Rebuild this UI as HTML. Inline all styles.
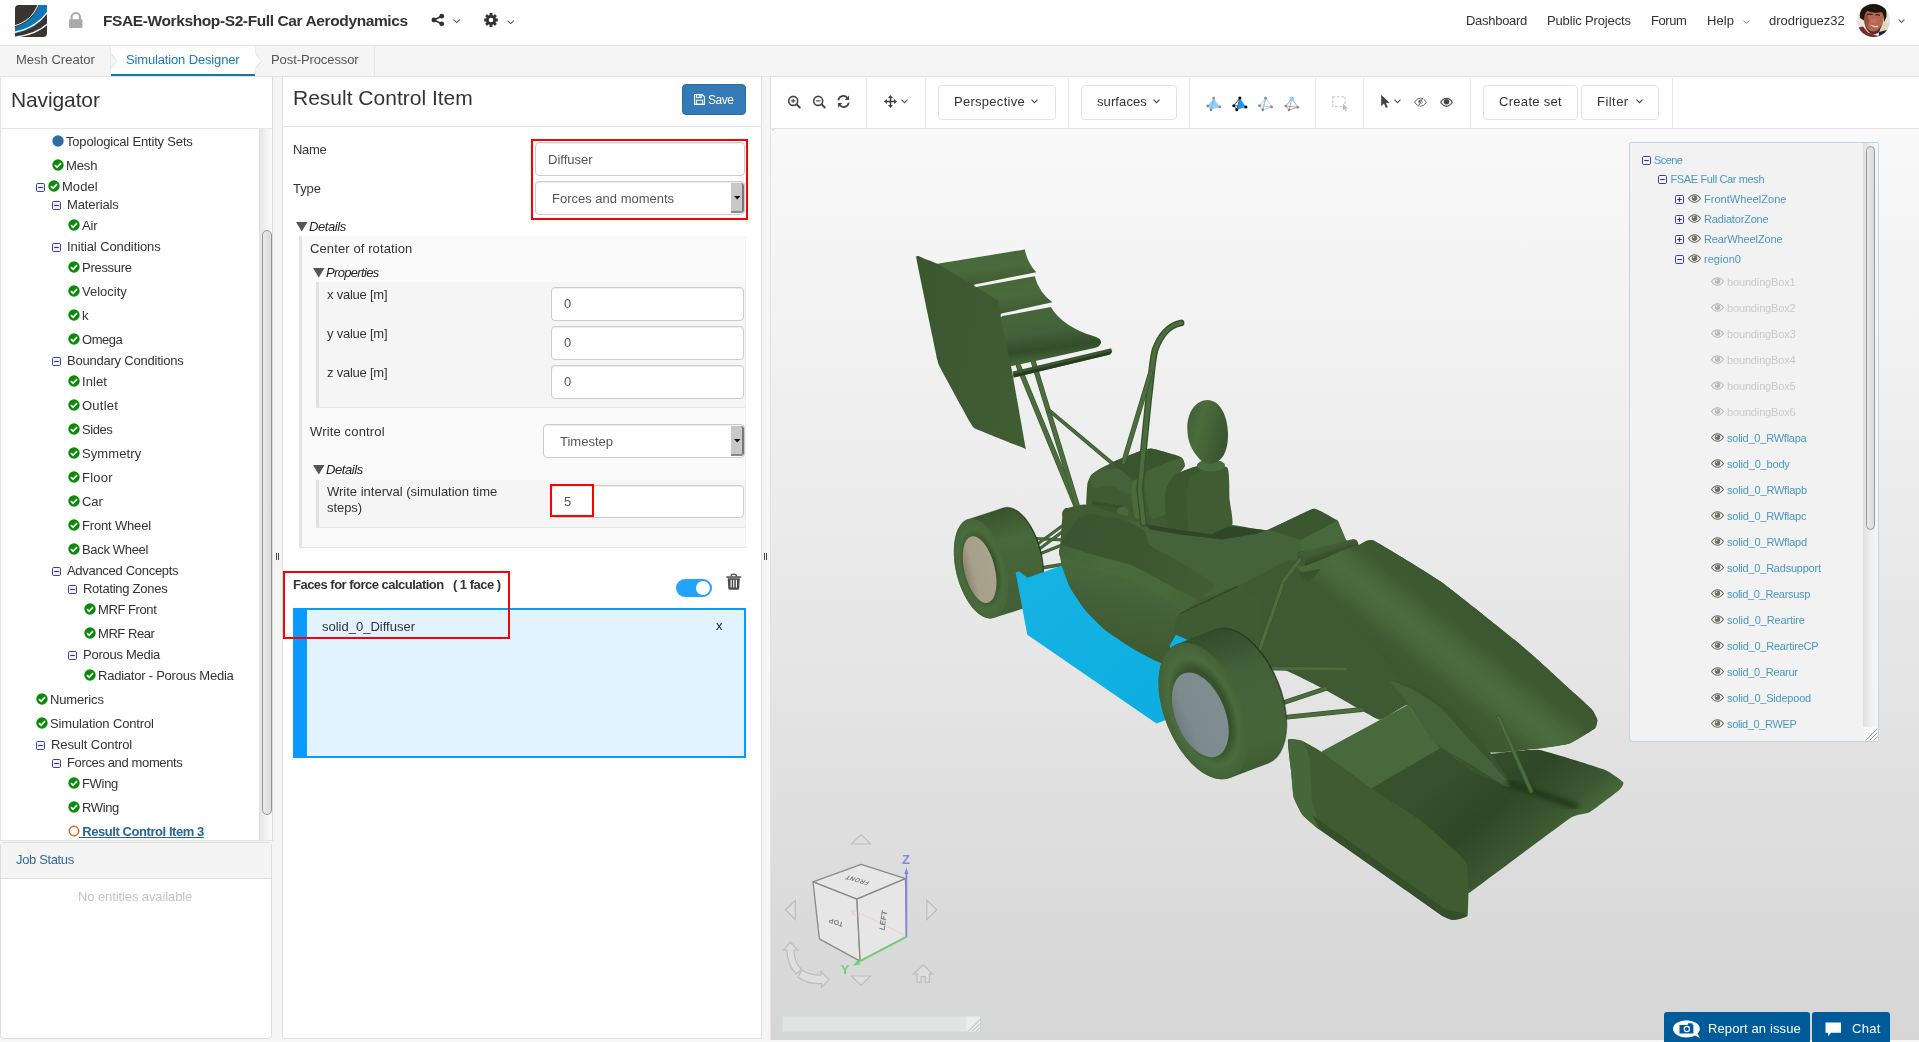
<!DOCTYPE html>
<html><head><meta charset="utf-8"><title>SimScale</title>
<style>
*{box-sizing:border-box;margin:0;padding:0}
html,body{width:1919px;height:1042px;overflow:hidden;background:#f5f5f5;font-family:"Liberation Sans",sans-serif;font-size:13px;color:#333}
.a{position:absolute;white-space:pre}
.t{position:absolute;white-space:pre;line-height:16px;height:16px;font-size:13px;color:#333}
svg{position:absolute;overflow:visible}
#hdr{position:absolute;left:0;top:0;width:1919px;height:46px;background:#fff;border-bottom:1px solid #e4e4e4}
#tabs{position:absolute;left:0;top:46px;width:1919px;height:31px;background:#f5f5f5;border-bottom:1px solid #e2e2e2}
.panel{position:absolute;background:#fff;border:1px solid #e3e3e3}
.inp{position:absolute;background:#fff;border:1px solid #ccc;border-radius:4px;box-shadow:inset 0 1px 1px rgba(0,0,0,.075);font-size:13px;color:#555;line-height:30px;white-space:pre}
.red{position:absolute;border:2px solid #f00}
.btn{position:absolute;background:#fff;border:1px solid #e2e2e2;border-radius:4px;font-size:13px;color:#333;white-space:pre}
.sep{position:absolute;top:78px;width:1px;height:50px;background:#e7e7e7}

#root{position:absolute;left:0;top:0;width:1919px;height:1042px;overflow:hidden;will-change:transform;background:#f5f5f5}

</style></head>
<body>
<div id="root">
<!-- header -->
<div id="hdr"></div>
<!-- logo -->
<svg style="left:15px;top:5px" width="32" height="32" viewBox="0 0 32 32">
  <defs><clipPath id="lg"><path d="M4 0H32V28a4 4 0 0 1-4 4H0V4a4 4 0 0 1 4-4z"/></clipPath></defs>
  <g clip-path="url(#lg)">
    <rect width="32" height="32" fill="#3b3532"/>
    <path d="M-1 22.4C11 19.5 20 11 24.5-1L33-1 33 7.2C25 19 14 26 -1 28.6z" fill="#0d76b3"/>
    <path d="M-1 20.9C10.5 18 19 10.5 23.3-1" fill="none" stroke="#fff" stroke-width="1"/>
    <path d="M-1 27.4C13 25 24.5 18 33 6.6" fill="none" stroke="#fff" stroke-width="1.3"/>
    <path d="M-1 32.2C13 30.8 25 26 33 18.5" fill="none" stroke="#fff" stroke-width="1.3"/>
  </g>
</svg>
<!-- lock -->
<svg style="left:68px;top:11px" width="16" height="18" viewBox="0 0 16 18">
  <path d="M3.6 9V6.2a4.2 4.2 0 0 1 8.4 0V9" fill="none" stroke="#aaa" stroke-width="2.1"/>
  <rect x="1.1" y="8.3" width="13.4" height="8.6" rx="0.8" fill="#aaa"/>
</svg>
<div class="a" style="left:103px;top:11px;font-size:15.5px;font-weight:bold;line-height:20px;letter-spacing:-0.39px;color:#333">FSAE-Workshop-S2-Full Car Aerodynamics</div>
<!-- share -->
<svg style="left:431px;top:13px" width="14" height="14" viewBox="0 0 14 14">
  <path d="M2.9 7L10.5 3.3M2.9 7L10.5 10.7" stroke="#333" stroke-width="1.7" fill="none"/>
  <circle cx="2.9" cy="7" r="2.4" fill="#333"/><circle cx="10.7" cy="3.2" r="2.4" fill="#333"/><circle cx="10.7" cy="10.8" r="2.4" fill="#333"/>
</svg>
<svg style="left:453px;top:19px" width="8" height="5" viewBox="0 0 8 5"><path d="M0.6 0.6L3.7 3.6 6.8 0.6" fill="none" stroke="#555" stroke-width="1.1"/></svg>
<!-- gear -->
<svg style="left:484px;top:13px" width="14" height="14" viewBox="-7 -7 14 14">
  <g fill="#333">
    <circle r="5.1"/>
    <rect x="-1.45" y="-6.9" width="2.9" height="13.8" rx="0.5"/>
    <rect x="-1.45" y="-6.9" width="2.9" height="13.8" rx="0.5" transform="rotate(45)"/><rect x="-1.45" y="-6.9" width="2.9" height="13.8" rx="0.5" transform="rotate(90)"/><rect x="-1.45" y="-6.9" width="2.9" height="13.8" rx="0.5" transform="rotate(135)"/>
  </g>
  <circle r="2.3" fill="#fff"/>
</svg>
<svg style="left:507px;top:20px" width="8" height="5" viewBox="0 0 8 5"><path d="M0.6 0.6L3.7 3.6 6.8 0.6" fill="none" stroke="#555" stroke-width="1.1"/></svg>
<!-- right nav -->
<div class="t" style="left:1466px;top:13px;font-size:13px;letter-spacing:-0.29px">Dashboard</div>
<div class="t" style="left:1547px;top:13px;font-size:13px;letter-spacing:-0.14px">Public Projects</div>
<div class="t" style="left:1651px;top:13px;font-size:13px;letter-spacing:-0.42px">Forum</div>
<div class="t" style="left:1707px;top:13px;font-size:13px;letter-spacing:0.11px">Help</div>
<svg style="left:1743px;top:19.500px" width="7" height="5" viewBox="0 0 7 5"><path d="M0.5 0.6L3.3 3.4 6.1 0.6" fill="none" stroke="#777" stroke-width="1"/></svg>
<div class="t" style="left:1769px;top:13px;font-size:13px;letter-spacing:-0.01px">drodriguez32</div>
<!-- avatar -->
<svg style="left:1857px;top:4px" width="33" height="33" viewBox="0 0 33 33">
  <defs><clipPath id="av"><circle cx="16.5" cy="16.5" r="16.5"/></clipPath><filter id="avb" x="-10%" y="-10%" width="120%" height="120%"><feGaussianBlur stdDeviation="0.55"/></filter></defs>
  <g clip-path="url(#av)"><g filter="url(#avb)">
    <rect x="-2" y="-2" width="37" height="37" fill="#e6e4e1"/>
    <rect x="24" y="19" width="11" height="9" fill="#e2d8b6"/>
    <path d="M-1 34V24l7-1.500 5 6 10 3.500 3-3 10 0v5z" fill="#7c2a26"/>
    <path d="M22 34v-6l12-3v9z" fill="#1a2140"/>
    <path d="M6.500 12C6.500 5 12 3 17 3s9.500 2 9.500 9c0 6-1.500 11.500-4.500 14.500s-7 4-10 1S6.500 18 6.500 12z" fill="#b4664f"/>
    <path d="M7 13c0 5 1.500 9 3 11l2-7c-1-2-1.500-5-1-8z" fill="#8a4638" opacity="0.8"/>
    <path d="M14 15c1.500-1 4-1 5.500 0l.5 3.500c-2 1-4.500 1-6.500 0z" fill="#c4705a" opacity="0.9"/>
    <path d="M7 17c1 5 3 10 6 12s7 1.500 9.500-1.500l2-6.500c-2 4.500-5 6.500-8.500 6.500S9 23.500 7 17z" fill="#4a3029"/>
    <path d="M3 14C2 6 7-1 16-1s14.500 4 13.500 13.500l-2.500 6c0-5.500-.8-9.500-2.800-10.500-4 1-9 1-14-1-2 2-3.200 5-3.200 9.500z" fill="#1c1411"/>
    <path d="M12.500 19.800c2.500 2 5.500 2.700 8.800 1.600l-.6 1.500c-3 .7-5.800 0-8.200-3.100z" fill="#f4ede6"/>
    <path d="M10 10.600c2-.8 4-.8 5.500-.1M18.500 11c1.500-.5 3-.3 4.500.3" stroke="#1c1411" stroke-width="1.100" fill="none"/>
  </g></g>
</svg>
<svg style="left:1898px;top:19px" width="8" height="5" viewBox="0 0 8 5"><path d="M0.6 0.5L3.5 3.4 6.4 0.5" fill="none" stroke="#667" stroke-width="1.1"/></svg>

<!-- tabs -->
<div id="tabs"></div>
<div class="a" style="left:111px;top:46px;width:144px;height:30px;background:#fff;border-bottom:2px solid #1676b3"></div>
<div class="a" style="left:110px;top:46px;width:1px;height:28px;background:#ececec"></div>
<div class="a" style="left:255px;top:46px;width:1px;height:28px;background:#ececec"></div>
<svg style="left:111px;top:53px" width="7" height="16" viewBox="0 0 7 16"><path d="M0,0.400 L5.800,7.900 L0,15.400Z" fill="#f5f5f5"/><path d="M0,0.400 L5.800,7.900 L0,15.400" fill="none" stroke="#e2e2e2" stroke-width="1"/></svg>
<svg style="left:255px;top:53px" width="8" height="16" viewBox="0 0 8 16"><path d="M0,0.400 L6.500,7.900 L0,15.400Z" fill="#fff"/><path d="M0.500,0.400 L6.500,7.900 L0.500,15.400" fill="none" stroke="#e2e2e2" stroke-width="1"/></svg>
<div class="a" style="left:374px;top:46px;width:1px;height:30px;background:#e6e6e6"></div>
<div class="t" style="left:16px;top:52px;font-size:13px;letter-spacing:0.01px;color:#555">Mesh Creator</div>
<div class="t" style="left:126px;top:52px;font-size:13px;letter-spacing:-0.15px;color:#1b78b6">Simulation Designer</div>
<div class="t" style="left:271px;top:52px;font-size:13px;letter-spacing:-0.09px;color:#555">Post-Processor</div>

<!-- nav -->
<div class="panel" style="left:0;top:76px;width:273px;height:765px;border-right-color:#dcdcdc"></div>
<div class="a" style="left:11px;top:87px;font-size:21px;line-height:26px;letter-spacing:-0.12px;color:#333">Navigator</div>
<div class="a" style="left:1px;top:128px;width:271px;height:1px;background:#e5e5e5"></div>
<div class="a" style="left:259px;top:129px;width:13px;height:711px;background:linear-gradient(90deg,#e2e2e2,#f3f3f3 60%,#fbfbfb)"></div>
<div class="a" style="left:262px;top:230px;width:10px;height:585px;border:1px solid #959595;border-radius:5px;background:linear-gradient(90deg,#e9e9e9,#dadada)"></div>
<svg style="left:51.5px;top:135px" width="12" height="12" viewBox="0 0 12 12"><circle cx="6" cy="6" r="5.7" fill="#2d6da3"/></svg>
<div class="t" style="left:66px;top:134px;font-size:13px;letter-spacing:-0.18px">Topological Entity Sets</div>
<svg style="left:51.5px;top:159px" width="12" height="12" viewBox="0 0 12 12"><circle cx="6" cy="6" r="5.7" fill="#0a8a0a"/><path d="M3 6.2L5.1 8.3 9 4.1" fill="none" stroke="#fff" stroke-width="1.7"/></svg>
<div class="t" style="left:66px;top:158px;font-size:13px;letter-spacing:-0.10px">Mesh</div>
<svg style="left:36px;top:182.5px" width="9" height="9" viewBox="0 0 9 9"><rect x="0.5" y="0.5" width="8" height="8" rx="1.2" fill="#f4f4fb" stroke="#3a3fb0" stroke-width="1"/><path d="M2.2 4.5H6.8" stroke="#2a2f9a" stroke-width="1.1"/></svg>
<svg style="left:47.5px;top:180px" width="12" height="12" viewBox="0 0 12 12"><circle cx="6" cy="6" r="5.7" fill="#0a8a0a"/><path d="M3 6.2L5.1 8.3 9 4.1" fill="none" stroke="#fff" stroke-width="1.7"/></svg>
<div class="t" style="left:62px;top:179px;font-size:13px;letter-spacing:0.04px">Model</div>
<svg style="left:52px;top:200.5px" width="9" height="9" viewBox="0 0 9 9"><rect x="0.5" y="0.5" width="8" height="8" rx="1.2" fill="#f4f4fb" stroke="#3a3fb0" stroke-width="1"/><path d="M2.2 4.5H6.8" stroke="#2a2f9a" stroke-width="1.1"/></svg>
<div class="t" style="left:67px;top:197px;font-size:13px;letter-spacing:-0.12px">Materials</div>
<svg style="left:67.5px;top:219px" width="12" height="12" viewBox="0 0 12 12"><circle cx="6" cy="6" r="5.7" fill="#0a8a0a"/><path d="M3 6.2L5.1 8.3 9 4.1" fill="none" stroke="#fff" stroke-width="1.7"/></svg>
<div class="t" style="left:82px;top:218px;font-size:13px;letter-spacing:-0.10px">Air</div>
<svg style="left:52px;top:242.5px" width="9" height="9" viewBox="0 0 9 9"><rect x="0.5" y="0.5" width="8" height="8" rx="1.2" fill="#f4f4fb" stroke="#3a3fb0" stroke-width="1"/><path d="M2.2 4.5H6.8" stroke="#2a2f9a" stroke-width="1.1"/></svg>
<div class="t" style="left:67px;top:239px;font-size:13px;letter-spacing:-0.10px">Initial Conditions</div>
<svg style="left:67.5px;top:261px" width="12" height="12" viewBox="0 0 12 12"><circle cx="6" cy="6" r="5.7" fill="#0a8a0a"/><path d="M3 6.2L5.1 8.3 9 4.1" fill="none" stroke="#fff" stroke-width="1.7"/></svg>
<div class="t" style="left:82px;top:260px;font-size:13px;letter-spacing:-0.28px">Pressure</div>
<svg style="left:67.5px;top:285px" width="12" height="12" viewBox="0 0 12 12"><circle cx="6" cy="6" r="5.7" fill="#0a8a0a"/><path d="M3 6.2L5.1 8.3 9 4.1" fill="none" stroke="#fff" stroke-width="1.7"/></svg>
<div class="t" style="left:82px;top:284px;font-size:13px;letter-spacing:0.01px">Velocity</div>
<svg style="left:67.5px;top:309px" width="12" height="12" viewBox="0 0 12 12"><circle cx="6" cy="6" r="5.7" fill="#0a8a0a"/><path d="M3 6.2L5.1 8.3 9 4.1" fill="none" stroke="#fff" stroke-width="1.7"/></svg>
<div class="t" style="left:82px;top:308px;font-size:13px;letter-spacing:-0.10px">k</div>
<svg style="left:67.5px;top:333px" width="12" height="12" viewBox="0 0 12 12"><circle cx="6" cy="6" r="5.7" fill="#0a8a0a"/><path d="M3 6.2L5.1 8.3 9 4.1" fill="none" stroke="#fff" stroke-width="1.7"/></svg>
<div class="t" style="left:82px;top:332px;font-size:13px;letter-spacing:-0.45px">Omega</div>
<svg style="left:52px;top:356.5px" width="9" height="9" viewBox="0 0 9 9"><rect x="0.5" y="0.5" width="8" height="8" rx="1.2" fill="#f4f4fb" stroke="#3a3fb0" stroke-width="1"/><path d="M2.2 4.5H6.8" stroke="#2a2f9a" stroke-width="1.1"/></svg>
<div class="t" style="left:67px;top:353px;font-size:13px;letter-spacing:-0.22px">Boundary Conditions</div>
<svg style="left:67.5px;top:375px" width="12" height="12" viewBox="0 0 12 12"><circle cx="6" cy="6" r="5.7" fill="#0a8a0a"/><path d="M3 6.2L5.1 8.3 9 4.1" fill="none" stroke="#fff" stroke-width="1.7"/></svg>
<div class="t" style="left:82px;top:374px;font-size:13px;letter-spacing:0.08px">Inlet</div>
<svg style="left:67.5px;top:399px" width="12" height="12" viewBox="0 0 12 12"><circle cx="6" cy="6" r="5.7" fill="#0a8a0a"/><path d="M3 6.2L5.1 8.3 9 4.1" fill="none" stroke="#fff" stroke-width="1.7"/></svg>
<div class="t" style="left:82px;top:398px;font-size:13px;letter-spacing:0.24px">Outlet</div>
<svg style="left:67.5px;top:423px" width="12" height="12" viewBox="0 0 12 12"><circle cx="6" cy="6" r="5.7" fill="#0a8a0a"/><path d="M3 6.2L5.1 8.3 9 4.1" fill="none" stroke="#fff" stroke-width="1.7"/></svg>
<div class="t" style="left:82px;top:422px;font-size:13px;letter-spacing:-0.45px">Sides</div>
<svg style="left:67.5px;top:447px" width="12" height="12" viewBox="0 0 12 12"><circle cx="6" cy="6" r="5.7" fill="#0a8a0a"/><path d="M3 6.2L5.1 8.3 9 4.1" fill="none" stroke="#fff" stroke-width="1.7"/></svg>
<div class="t" style="left:82px;top:446px;font-size:13px;letter-spacing:0.09px">Symmetry</div>
<svg style="left:67.5px;top:471px" width="12" height="12" viewBox="0 0 12 12"><circle cx="6" cy="6" r="5.7" fill="#0a8a0a"/><path d="M3 6.2L5.1 8.3 9 4.1" fill="none" stroke="#fff" stroke-width="1.7"/></svg>
<div class="t" style="left:82px;top:470px;font-size:13px;letter-spacing:0.25px">Floor</div>
<svg style="left:67.5px;top:495px" width="12" height="12" viewBox="0 0 12 12"><circle cx="6" cy="6" r="5.7" fill="#0a8a0a"/><path d="M3 6.2L5.1 8.3 9 4.1" fill="none" stroke="#fff" stroke-width="1.7"/></svg>
<div class="t" style="left:82px;top:494px;font-size:13px;letter-spacing:-0.10px">Car</div>
<svg style="left:67.5px;top:519px" width="12" height="12" viewBox="0 0 12 12"><circle cx="6" cy="6" r="5.7" fill="#0a8a0a"/><path d="M3 6.2L5.1 8.3 9 4.1" fill="none" stroke="#fff" stroke-width="1.7"/></svg>
<div class="t" style="left:82px;top:518px;font-size:13px;letter-spacing:-0.17px">Front Wheel</div>
<svg style="left:67.5px;top:543px" width="12" height="12" viewBox="0 0 12 12"><circle cx="6" cy="6" r="5.7" fill="#0a8a0a"/><path d="M3 6.2L5.1 8.3 9 4.1" fill="none" stroke="#fff" stroke-width="1.7"/></svg>
<div class="t" style="left:82px;top:542px;font-size:13px;letter-spacing:-0.33px">Back Wheel</div>
<svg style="left:52px;top:566.5px" width="9" height="9" viewBox="0 0 9 9"><rect x="0.5" y="0.5" width="8" height="8" rx="1.2" fill="#f4f4fb" stroke="#3a3fb0" stroke-width="1"/><path d="M2.2 4.5H6.8" stroke="#2a2f9a" stroke-width="1.1"/></svg>
<div class="t" style="left:67px;top:563px;font-size:13px;letter-spacing:-0.30px">Advanced Concepts</div>
<svg style="left:68px;top:584.5px" width="9" height="9" viewBox="0 0 9 9"><rect x="0.5" y="0.5" width="8" height="8" rx="1.2" fill="#f4f4fb" stroke="#3a3fb0" stroke-width="1"/><path d="M2.2 4.5H6.8" stroke="#2a2f9a" stroke-width="1.1"/></svg>
<div class="t" style="left:83px;top:581px;font-size:13px;letter-spacing:-0.27px">Rotating Zones</div>
<svg style="left:83.5px;top:603px" width="12" height="12" viewBox="0 0 12 12"><circle cx="6" cy="6" r="5.7" fill="#0a8a0a"/><path d="M3 6.2L5.1 8.3 9 4.1" fill="none" stroke="#fff" stroke-width="1.7"/></svg>
<div class="t" style="left:98px;top:602px;font-size:13px;letter-spacing:-0.42px">MRF Front</div>
<svg style="left:83.5px;top:627px" width="12" height="12" viewBox="0 0 12 12"><circle cx="6" cy="6" r="5.7" fill="#0a8a0a"/><path d="M3 6.2L5.1 8.3 9 4.1" fill="none" stroke="#fff" stroke-width="1.7"/></svg>
<div class="t" style="left:98px;top:626px;font-size:13px;letter-spacing:-0.45px">MRF Rear</div>
<svg style="left:68px;top:650.5px" width="9" height="9" viewBox="0 0 9 9"><rect x="0.5" y="0.5" width="8" height="8" rx="1.2" fill="#f4f4fb" stroke="#3a3fb0" stroke-width="1"/><path d="M2.2 4.5H6.8" stroke="#2a2f9a" stroke-width="1.1"/></svg>
<div class="t" style="left:83px;top:647px;font-size:13px;letter-spacing:-0.26px">Porous Media</div>
<svg style="left:83.5px;top:669px" width="12" height="12" viewBox="0 0 12 12"><circle cx="6" cy="6" r="5.7" fill="#0a8a0a"/><path d="M3 6.2L5.1 8.3 9 4.1" fill="none" stroke="#fff" stroke-width="1.7"/></svg>
<div class="t" style="left:98px;top:668px;font-size:13px;letter-spacing:-0.23px">Radiator - Porous Media</div>
<svg style="left:35.5px;top:693px" width="12" height="12" viewBox="0 0 12 12"><circle cx="6" cy="6" r="5.7" fill="#0a8a0a"/><path d="M3 6.2L5.1 8.3 9 4.1" fill="none" stroke="#fff" stroke-width="1.7"/></svg>
<div class="t" style="left:50px;top:692px;font-size:13px;letter-spacing:-0.14px">Numerics</div>
<svg style="left:35.5px;top:717px" width="12" height="12" viewBox="0 0 12 12"><circle cx="6" cy="6" r="5.7" fill="#0a8a0a"/><path d="M3 6.2L5.1 8.3 9 4.1" fill="none" stroke="#fff" stroke-width="1.7"/></svg>
<div class="t" style="left:50px;top:716px;font-size:13px;letter-spacing:-0.13px">Simulation Control</div>
<svg style="left:36px;top:740.5px" width="9" height="9" viewBox="0 0 9 9"><rect x="0.5" y="0.5" width="8" height="8" rx="1.2" fill="#f4f4fb" stroke="#3a3fb0" stroke-width="1"/><path d="M2.2 4.5H6.8" stroke="#2a2f9a" stroke-width="1.1"/></svg>
<div class="t" style="left:51px;top:737px;font-size:13px;letter-spacing:-0.09px">Result Control</div>
<svg style="left:52px;top:758.5px" width="9" height="9" viewBox="0 0 9 9"><rect x="0.5" y="0.5" width="8" height="8" rx="1.2" fill="#f4f4fb" stroke="#3a3fb0" stroke-width="1"/><path d="M2.2 4.5H6.8" stroke="#2a2f9a" stroke-width="1.1"/></svg>
<div class="t" style="left:67px;top:755px;font-size:13px;letter-spacing:-0.37px">Forces and moments</div>
<svg style="left:67.5px;top:777px" width="12" height="12" viewBox="0 0 12 12"><circle cx="6" cy="6" r="5.7" fill="#0a8a0a"/><path d="M3 6.2L5.1 8.3 9 4.1" fill="none" stroke="#fff" stroke-width="1.7"/></svg>
<div class="t" style="left:82px;top:776px;font-size:13px;letter-spacing:-0.32px">FWing</div>
<svg style="left:67.5px;top:801px" width="12" height="12" viewBox="0 0 12 12"><circle cx="6" cy="6" r="5.7" fill="#0a8a0a"/><path d="M3 6.2L5.1 8.3 9 4.1" fill="none" stroke="#fff" stroke-width="1.7"/></svg>
<div class="t" style="left:82px;top:800px;font-size:13px;letter-spacing:-0.37px">RWing</div>
<svg style="left:67.5px;top:825px" width="12" height="12" viewBox="0 0 12 12"><circle cx="6" cy="6" r="4.7" fill="#fff" stroke="#e0601f" stroke-width="1.5"/></svg>
<div class="t" style="left:79px;top:824px;font-size:13px;font-weight:bold;letter-spacing:-0.43px;color:#2a6496;text-decoration:underline"> Result Control Item 3</div>
<div class="panel" style="left:0;top:842px;width:272px;height:197px;border-radius:4px;border-color:#dcdcdc"></div>
<div class="a" style="left:1px;top:843px;width:270px;height:36px;background:#f4f4f4;border-bottom:1px solid #ddd;border-radius:3px 3px 0 0"></div>
<div class="t" style="left:16px;top:852px;font-size:13px;letter-spacing:-0.36px;color:#33699a">Job Status</div>
<div class="t" style="left:78px;top:889px;font-size:13px;letter-spacing:-0.10px;color:#c4c4c4">No entities available</div>
<!-- mid -->
<div class="panel" style="left:282px;top:76px;width:480px;height:963px;border-color:#e2e2e2"></div>
<div class="a" style="left:293px;top:85px;font-size:21px;line-height:26px;letter-spacing:0;color:#333">Result Control Item</div>
<div class="a" style="left:283px;top:126px;width:478px;height:1px;background:#e5e5e5"></div>
<!-- save button -->
<div class="a" style="left:682px;top:84px;width:64px;height:31px;background:#337ab7;border:1px solid #2e6da4;border-radius:4px"></div>
<svg style="left:694px;top:94px" width="11" height="11" viewBox="0 0 11 11"><path d="M0.6 0.6H8.2L10.4 2.800V10.400H0.6z" fill="none" stroke="#fff" stroke-width="1.1"/><rect x="2.6" y="0.6" width="4.6" height="3" fill="none" stroke="#fff" stroke-width="1"/><rect x="5.3" y="1.2" width="1.2" height="1.8" fill="#fff"/><rect x="2.4" y="6.2" width="6.2" height="4" fill="none" stroke="#fff" stroke-width="1"/></svg>
<div class="t" style="left:708px;top:92px;font-size:12px;letter-spacing:-0.5px;color:#fff">Save</div>

<div class="t" style="left:293px;top:142px;font-size:13px;letter-spacing:-0.28px">Name</div>
<div class="t" style="left:293px;top:181px;font-size:13px;letter-spacing:-0.06px">Type</div>
<div class="inp" style="left:535px;top:142px;width:210px;height:34px;padding-left:12px;line-height:33px">Diffuser</div>
<div class="inp" style="left:535px;top:181px;width:210px;height:34px;padding-left:16px;line-height:33px">Forces and moments</div>
<div class="a" style="left:731px;top:183px;width:13px;height:30px;background:#c8c8c8;border-right:2px solid #777;border-bottom:2px solid #888;border-radius:0 3px 3px 0"></div>
<svg style="left:734px;top:196px" width="7" height="4" viewBox="0 0 7 4"><path d="M0 0H6.5L3.250 3.600z" fill="#111"/></svg>
<div class="red" style="left:531px;top:139px;width:217px;height:81px"></div>

<!-- Details -->
<svg style="left:296px;top:222px" width="12" height="10" viewBox="0 0 12 10"><path d="M0 0H11.500L5.750 9.500z" fill="#555"/></svg>
<div class="t" style="left:309px;top:219px;font-size:13px;font-style:italic;letter-spacing:-0.41px;color:#222">Details</div>
<div class="a" style="left:299px;top:236px;width:447px;height:312px;background:#fafafa;border-left:3px solid #e4e4e4;border-bottom:1px solid #e4e4e4;border-right:1px solid #eee"></div>
<div class="t" style="left:310px;top:241px;font-size:13px;letter-spacing:0.11px">Center of rotation</div>
<svg style="left:313px;top:268px" width="12" height="10" viewBox="0 0 12 10"><path d="M0 0H11.500L5.750 9.500z" fill="#555"/></svg>
<div class="t" style="left:326px;top:265px;font-size:13px;font-style:italic;letter-spacing:-0.67px;color:#222">Properties</div>
<div class="a" style="left:316px;top:282px;width:429px;height:126px;background:#f5f5f5;border-left:3px solid #e0e0e0;border-bottom:1px solid #e6e6e6"></div>
<div class="t" style="left:327px;top:287px;font-size:13px;letter-spacing:-0.23px">x value [m]</div>
<div class="t" style="left:327px;top:326px;font-size:13px;letter-spacing:-0.23px">y value [m]</div>
<div class="t" style="left:327px;top:365px;font-size:13px;letter-spacing:-0.23px">z value [m]</div>
<div class="inp" style="left:551px;top:287px;width:193px;height:34px;padding-left:12px;line-height:32px">0</div>
<div class="inp" style="left:551px;top:326px;width:193px;height:34px;padding-left:12px;line-height:32px">0</div>
<div class="inp" style="left:551px;top:365px;width:193px;height:34px;padding-left:12px;line-height:32px">0</div>

<div class="t" style="left:310px;top:424px;font-size:13px;letter-spacing:0.15px">Write control</div>
<div class="inp" style="left:543px;top:424px;width:202px;height:34px;padding-left:16px;line-height:33px">Timestep</div>
<div class="a" style="left:731px;top:426px;width:13px;height:30px;background:#c8c8c8;border-right:2px solid #777;border-bottom:2px solid #888;border-radius:0 3px 3px 0"></div>
<svg style="left:734px;top:439px" width="7" height="4" viewBox="0 0 7 4"><path d="M0 0H6.5L3.250 3.600z" fill="#111"/></svg>
<svg style="left:313px;top:465px" width="12" height="10" viewBox="0 0 12 10"><path d="M0 0H11.500L5.750 9.500z" fill="#555"/></svg>
<div class="t" style="left:326px;top:462px;font-size:13px;font-style:italic;letter-spacing:-0.41px;color:#222">Details</div>
<div class="a" style="left:316px;top:480px;width:429px;height:48px;background:#f5f5f5;border-left:3px solid #e0e0e0;border-bottom:1px solid #e6e6e6"></div>
<div class="t" style="left:327px;top:484px;font-size:13px;letter-spacing:0.00px">Write interval (simulation time</div>
<div class="t" style="left:327px;top:500px;font-size:13px;letter-spacing:-0.05px">steps)</div>
<div class="inp" style="left:551px;top:485px;width:193px;height:33px;padding-left:12px;line-height:31px">5</div>
<div class="red" style="left:550px;top:484px;width:44px;height:33px"></div>

<!-- splitters -->
<div class="a" style="left:276px;top:553px;width:1px;height:7px;background:#444"></div><div class="a" style="left:278px;top:553px;width:1px;height:7px;background:#444"></div>
<div class="a" style="left:764px;top:553px;width:1px;height:7px;background:#444"></div><div class="a" style="left:766px;top:553px;width:1px;height:7px;background:#444"></div>

<!-- faces -->
<div class="t" style="left:293px;top:577px;font-size:13px;font-weight:bold;letter-spacing:-0.52px">Faces for force calculation   ( 1 face )</div>
<div class="a" style="left:676px;top:579px;width:36px;height:18px;border-radius:9px;background:#22a4fc"></div>
<div class="a" style="left:696px;top:581px;width:14px;height:14px;border-radius:7px;background:#fff"></div>
<svg style="left:726px;top:573px" width="16" height="18" viewBox="0 0 16 18"><path d="M5,3.400 C5,1.600 6,1.200 7.750,1.200 S10.500,1.600 10.500,3.400" fill="none" stroke="#4c4c4c" stroke-width="1.300"/><rect x="0.300" y="3.300" width="14.900" height="1.500" fill="#4c4c4c"/><path d="M1.700,5.200 H13.800 L13.200,15.600 a1.200,1.200 0 0 1 -1.200,1.100 H3.500 a1.200,1.200 0 0 1 -1.200,-1.100z" fill="#4c4c4c"/><path d="M5.100,6.800 V14.600 M7.750,6.800 V14.600 M10.400,6.800 V14.600" stroke="#fff" stroke-width="1.100"/></svg>
<div class="a" style="left:293px;top:608px;width:453px;height:150px;background:#e1f3ff;border:2px solid #0a99ff;border-left-width:14px"></div>
<div class="t" style="left:322px;top:619px;font-size:13px;letter-spacing:-0.00px">solid_0_Diffuser</div>
<div class="t" style="left:716px;top:618px;font-size:13px;color:#222;letter-spacing:0.50px">x</div>
<div class="red" style="left:283px;top:571px;width:227px;height:68px"></div>

<!-- viewer -->
<div class="panel" style="left:770px;top:76px;width:1150px;height:966px;border-color:#e2e2e2;border-bottom:none"></div>
<!-- canvas gradient -->
<div class="a" style="left:771px;top:129px;width:1148px;height:911px;background:linear-gradient(180deg,#f9f9f9 0%,#f3f3f3 18%,#ececec 40%,#e4e4e4 62%,#dcdcdc 82%,#d6d6d6 100%)"></div>
<div class="a" style="left:771px;top:128px;width:1148px;height:1px;background:#e4e4e4"></div>
<div class="a" style="left:0;top:1040px;width:1919px;height:2px;background:#f7f7f7"></div>
<div class="a" style="left:772px;top:129px;width:2px;height:2px;background:#ddd"></div>
<div class="sep" style="left:866px"></div><div class="sep" style="left:925px"></div><div class="sep" style="left:1068px"></div><div class="sep" style="left:1189px"></div><div class="sep" style="left:1315px"></div><div class="sep" style="left:1363px"></div><div class="sep" style="left:1470px"></div><div class="sep" style="left:1672px"></div>
<!-- zoom in -->
<svg style="left:787px;top:95px" width="14" height="14" viewBox="0 0 14 14"><circle cx="6.2" cy="5.900" r="4.500" fill="none" stroke="#444" stroke-width="1.600"/><path d="M9.500 9.200L12.800 12.500" stroke="#444" stroke-width="1.900" stroke-linecap="round"/><path d="M4 5.900H8.400M6.200 3.700V8.100" stroke="#444" stroke-width="1.100"/></svg>
<svg style="left:812px;top:95px" width="14" height="14" viewBox="0 0 14 14"><circle cx="6.2" cy="5.900" r="4.500" fill="none" stroke="#444" stroke-width="1.600"/><path d="M9.500 9.200L12.800 12.500" stroke="#444" stroke-width="1.900" stroke-linecap="round"/><path d="M4 5.900H8.400" stroke="#444" stroke-width="1.100"/></svg>
<!-- refresh -->
<svg style="left:837px;top:95px" width="13" height="13" viewBox="0 0 13 13"><path d="M1.300 5.300A5 5 0 0 1 10.300 3" fill="none" stroke="#444" stroke-width="1.700"/><path d="M11.700 7.700A5 5 0 0 1 2.700 10" fill="none" stroke="#444" stroke-width="1.700"/><path d="M12 0.600V5H7.600z" fill="#444"/><path d="M1 12.400V8H5.400z" fill="#444"/></svg>
<!-- move -->
<svg style="left:884px;top:95px" width="13" height="13" viewBox="0 0 13 13"><path d="M6.500 0L9 3H7.300V5.700H10V4L13 6.500 10 9V7.300H7.300V10H9L6.500 13 4 10H5.700V7.300H3V9L0 6.500 3 4V5.700H5.700V3H4z" fill="#444"/></svg>
<svg style="left:901px;top:99px" width="8" height="5" viewBox="0 0 8 5"><path d="M0.500 0.600L3.500 3.600 6.500 0.600" fill="none" stroke="#555" stroke-width="1.100"/></svg>
<!-- buttons -->
<div class="btn" style="left:938px;top:85px;width:118px;height:35px"></div>
<div class="t" style="left:954px;top:94px;letter-spacing:0.28px">Perspective</div>
<svg style="left:1031px;top:99px" width="8" height="5" viewBox="0 0 8 5"><path d="M0.500 0.600L3.500 3.600 6.500 0.600" fill="none" stroke="#444" stroke-width="1.100"/></svg>
<div class="btn" style="left:1081px;top:85px;width:96px;height:35px"></div>
<div class="t" style="left:1097px;top:94px;letter-spacing:0.1px">surfaces</div>
<svg style="left:1153px;top:99px" width="8" height="5" viewBox="0 0 8 5"><path d="M0.500 0.600L3.500 3.600 6.500 0.600" fill="none" stroke="#444" stroke-width="1.100"/></svg>
<!-- pyramids -->
<svg style="left:1205px;top:95px" width="18" height="18" viewBox="1205 95 18 18"><path d="M1213.700 98.100L1207.800 106 1210.900 109.800 1219.800 106.900z" fill="#8fd0ff"/><path d="M1213.700 98.100L1210.900 109.800" stroke="#6aa8d8" stroke-width="0.700"/><g fill="#888"><circle cx="1213.700" cy="98.100" r="1.400"/><circle cx="1207.800" cy="106" r="1.400"/><circle cx="1210.900" cy="109.800" r="1.400"/><circle cx="1219.800" cy="106.900" r="1.400"/></g></svg>
<svg style="left:1231px;top:95px" width="18" height="18" viewBox="1231 95 18 18"><path d="M1239.900 98.100L1233.800 105.700 1236.800 109.800z" fill="#fff" stroke="#111" stroke-width="0.800"/><path d="M1233.800 105.700L1245.900 106.900" stroke="#111" stroke-width="0.600"/><path d="M1239.900 98.100L1236.800 109.800 1245.900 106.900z" fill="#2196f3"/><g fill="#000"><circle cx="1239.900" cy="98.100" r="1.500"/><circle cx="1233.800" cy="105.700" r="1.500"/><circle cx="1236.800" cy="109.800" r="1.500"/><circle cx="1245.900" cy="106.900" r="1.500"/></g></svg>
<svg style="left:1257px;top:95px" width="18" height="18" viewBox="1257 95 18 18"><path d="M1265.600 98.100L1259.500 105.700 1262.800 109.800 1271.600 106.900zM1259.500 105.700L1271.600 106.900" fill="none" stroke="#bbb" stroke-width="0.700"/><path d="M1265.600 98.100L1262.800 109.800" stroke="#8fd0ff" stroke-width="1.500"/><g fill="#888"><circle cx="1265.600" cy="98.100" r="1.400"/><circle cx="1259.500" cy="105.700" r="1.400"/><circle cx="1262.800" cy="109.800" r="1.400"/><circle cx="1271.600" cy="106.900" r="1.400"/></g></svg>
<svg style="left:1283px;top:95px" width="18" height="18" viewBox="1283 95 18 18"><path d="M1292 98.500L1285.700 106 1289 110 1297.800 107.200zM1285.700 106L1297.800 107.200M1292 98.500L1289 110" fill="none" stroke="#888" stroke-width="0.700"/><g fill="#888"><circle cx="1285.700" cy="106" r="1.300"/><circle cx="1289" cy="110" r="1.300"/><circle cx="1297.800" cy="107.200" r="1.300"/></g><circle cx="1292" cy="98.700" r="2.200" fill="#8fd0ff"/></svg>
<!-- selection box -->
<svg style="left:1331px;top:95px" width="18" height="18" viewBox="1331 95 18 18"><rect x="1332.800" y="96.700" width="12.200" height="9.800" fill="none" stroke="#c4c4c4" stroke-width="1.100" stroke-dasharray="2.600 1.600"/><path d="M1343 103.800V110.500L1344.700 109.200 1345.900 111.500 1346.900 111 1345.800 108.800 1347.800 108.600z" fill="#bbb"/></svg>
<!-- cursor -->
<svg style="left:1380px;top:94px" width="11" height="15" viewBox="0 0 11 15"><path d="M1.200 0.800V12.200L4 9.600 5.900 13.900 7.800 13 5.900 8.900 9.700 8.700z" fill="#444"/></svg>
<svg style="left:1394px;top:99px" width="8" height="5" viewBox="0 0 8 5"><path d="M0.500 0.600L3.500 3.600 6.500 0.600" fill="none" stroke="#555" stroke-width="1.100"/></svg>
<!-- eye slash -->
<svg style="left:1414px;top:96.700px" width="13" height="10.400" viewBox="0 0 15 12"><path d="M0.800 6C3 2.500 5 1.500 7.500 1.500S12 2.500 14.200 6C12 9.500 10 10.500 7.500 10.500S3 9.500 0.800 6z" fill="none" stroke="#555" stroke-width="1.100"/><circle cx="7.500" cy="5.800" r="2.500" fill="#555"/><path d="M10.800 0.500L5 11.500" stroke="#fff" stroke-width="2.400"/><path d="M10.300 0.800L4.800 11.200" stroke="#555" stroke-width="1.100"/></svg>
<!-- eye -->
<svg style="left:1440.100px;top:96.700px" width="13" height="10.400" viewBox="0 0 15 12"><path d="M0.800 6C3 2.500 5 1.500 7.500 1.500S12 2.500 14.200 6C12 9.500 10 10.500 7.500 10.500S3 9.500 0.800 6z" fill="#fff" stroke="#444" stroke-width="1.300"/><circle cx="7.500" cy="5.600" r="3.200" fill="#444"/></svg>
<div class="btn" style="left:1483px;top:85px;width:95px;height:35px"></div>
<div class="t" style="left:1499px;top:94px;letter-spacing:0.3px">Create set</div>
<div class="btn" style="left:1581px;top:85px;width:78px;height:35px"></div>
<div class="t" style="left:1597px;top:94px;letter-spacing:0.45px">Filter</div>
<svg style="left:1636px;top:99px" width="8" height="5" viewBox="0 0 8 5"><path d="M0.500 0.600L3.500 3.600 6.500 0.600" fill="none" stroke="#444" stroke-width="1.100"/></svg>

<!-- car -->
<svg style="left:0;top:0" width="1919" height="1042" viewBox="0 0 1919 1042">
<defs>
<clipPath id="cv"><rect x="771" y="129" width="1148" height="911"/></clipPath>
<linearGradient id="gEnd" x1="0" y1="0" x2="1" y2="0.3"><stop offset="0" stop-color="#3b5730"/><stop offset="1" stop-color="#405c33"/></linearGradient>
<linearGradient id="gFlap" x1="0" y1="0" x2="0.25" y2="1"><stop offset="0" stop-color="#466638"/><stop offset="0.55" stop-color="#4a6b3c"/><stop offset="1" stop-color="#3c5831"/></linearGradient>
<linearGradient id="gMainEl" x1="0" y1="0" x2="0.2" y2="1"><stop offset="0" stop-color="#486839"/><stop offset="0.45" stop-color="#43623a"/><stop offset="0.72" stop-color="#334d2a"/><stop offset="0.9" stop-color="#466638"/><stop offset="1" stop-color="#2e4526"/></linearGradient>
<linearGradient id="gTread1" gradientUnits="userSpaceOnUse" x1="1000" y1="505" x2="1030" y2="620"><stop offset="0" stop-color="#36512c"/><stop offset="0.3" stop-color="#48693b"/><stop offset="1" stop-color="#405c33"/></linearGradient>
<radialGradient id="gSide1" cx="0.5" cy="0.5" r="0.5"><stop offset="0.55" stop-color="#36512c"/><stop offset="0.8" stop-color="#4a6b3c"/><stop offset="1" stop-color="#466638"/></radialGradient>
<linearGradient id="gRim1" x1="0" y1="0" x2="1" y2="0"><stop offset="0" stop-color="#8a8472"/><stop offset="0.3" stop-color="#a7a08b"/><stop offset="1" stop-color="#aaa38e"/></linearGradient>
<linearGradient id="gTread2" gradientUnits="userSpaceOnUse" x1="1230" y1="625" x2="1270" y2="780"><stop offset="0" stop-color="#324c29"/><stop offset="0.3" stop-color="#43623a"/><stop offset="0.75" stop-color="#456538"/><stop offset="1" stop-color="#3a5630"/></linearGradient>
<radialGradient id="gSide2" cx="0.5" cy="0.5" r="0.5"><stop offset="0.6" stop-color="#36512c"/><stop offset="0.78" stop-color="#4b6c3d"/><stop offset="1" stop-color="#436238"/></radialGradient>
<linearGradient id="gRim2" x1="0" y1="0" x2="1" y2="0"><stop offset="0" stop-color="#6f7d80"/><stop offset="0.25" stop-color="#7d8b8e"/><stop offset="1" stop-color="#808e91"/></linearGradient>
<linearGradient id="gNose" gradientUnits="userSpaceOnUse" x1="1500" y1="628" x2="1438" y2="705"><stop offset="0" stop-color="#3c5831"/><stop offset="0.26" stop-color="#3e5a32"/><stop offset="0.4" stop-color="#47683a"/><stop offset="0.52" stop-color="#4b6c3d"/><stop offset="0.66" stop-color="#48693b"/><stop offset="0.8" stop-color="#3f5b33"/><stop offset="1" stop-color="#3c5831"/></linearGradient>
<linearGradient id="gPlane" gradientUnits="userSpaceOnUse" x1="1470" y1="750" x2="1560" y2="850"><stop offset="0" stop-color="#36512c"/><stop offset="0.45" stop-color="#2f4727"/><stop offset="0.8" stop-color="#3c5831"/><stop offset="1" stop-color="#4a6b3c"/></linearGradient>
<linearGradient id="gHead" x1="0" y1="0" x2="1" y2="0.4"><stop offset="0" stop-color="#405c33"/><stop offset="0.4" stop-color="#4b6c3d"/><stop offset="1" stop-color="#3a5630"/></linearGradient>
<linearGradient id="gSideBody" gradientUnits="userSpaceOnUse" x1="1100" y1="560" x2="1080" y2="640"><stop offset="0" stop-color="#4a6b3c"/><stop offset="0.35" stop-color="#44633a"/><stop offset="1" stop-color="#3e5a32"/></linearGradient>
<linearGradient id="gCyan" gradientUnits="userSpaceOnUse" x1="1030" y1="575" x2="1150" y2="720"><stop offset="0" stop-color="#14b3e3"/><stop offset="1" stop-color="#0eaee0"/></linearGradient>
<linearGradient id="gDeck" gradientUnits="userSpaceOnUse" x1="1066" y1="530" x2="1205" y2="590"><stop offset="0" stop-color="#3a5630"/><stop offset="0.45" stop-color="#3b5730"/><stop offset="1" stop-color="#415d34"/></linearGradient>
<linearGradient id="gRidge" gradientUnits="userSpaceOnUse" x1="1062" y1="550" x2="1195" y2="605"><stop offset="0" stop-color="#43623a"/><stop offset="0.3" stop-color="#4a6b3c"/><stop offset="0.8" stop-color="#48693a"/><stop offset="1" stop-color="#43623a"/></linearGradient>
<linearGradient id="gOut1" gradientUnits="userSpaceOnUse" x1="985" y1="560" x2="1040" y2="535"><stop offset="0" stop-color="#1d2c18" stop-opacity="0"/><stop offset="0.5" stop-color="#1d2c18" stop-opacity="0.25"/><stop offset="1" stop-color="#1a2815" stop-opacity="0.95"/></linearGradient>
<linearGradient id="gOut2" gradientUnits="userSpaceOnUse" x1="1210" y1="700" x2="1280" y2="660"><stop offset="0" stop-color="#1d2c18" stop-opacity="0"/><stop offset="0.5" stop-color="#1d2c18" stop-opacity="0.25"/><stop offset="1" stop-color="#1a2815" stop-opacity="0.95"/></linearGradient>
<linearGradient id="gCyl" gradientUnits="userSpaceOnUse" x1="1325" y1="543" x2="1330" y2="558"><stop offset="0" stop-color="#2f4727"/><stop offset="0.12" stop-color="#44633a"/><stop offset="0.5" stop-color="#3f5b33"/><stop offset="1" stop-color="#2f4727"/></linearGradient>
<filter id="bl"><feGaussianBlur stdDeviation="2.5"/></filter>
<filter id="bl1"><feGaussianBlur stdDeviation="1.2"/></filter>
</defs>
<g clip-path="url(#cv)">
<path d="M1018.5,366 L1076,506" stroke="#38542e" stroke-width="5.2" stroke-linecap="round" fill="none"/>
<path d="M1018.5,366 L1076,506" stroke="#4c6d3e" stroke-width="3.8000000000000003" stroke-linecap="round" fill="none"/>
<path d="M1033.5,362.3 L1078,508" stroke="#38542e" stroke-width="5.2" stroke-linecap="round" fill="none"/>
<path d="M1033.5,362.3 L1078,508" stroke="#4c6d3e" stroke-width="3.8000000000000003" stroke-linecap="round" fill="none"/>
<path d="M1049.7,410.9 L1112.1,463.3" stroke="#38542e" stroke-width="3.8" stroke-linecap="round" fill="none"/>
<path d="M1049.7,410.9 L1112.1,463.3" stroke="#4c6d3e" stroke-width="2.4" stroke-linecap="round" fill="none"/>
<path d="M934,266.500 L937.4,263.7 L1024.8,249.5 Q1027.5,263 1036.2,272.2 L974.9,284.4 L970,290 Z" fill="url(#gFlap)" />
<path d="M972,291 L976.1,286.9 L1034.7,276.2 Q1039,292.500 1052.4,302.2 L1001.5,313.6 L996,319 L992,303 Z" fill="url(#gFlap)" />
<path d="M998,320 L1002.3,316.1 L1050.9,306.9 C1058,320 1075,330.500 1094,336.300 Q1102.500,339 1100.800,343.500 Q1099.500,347 1094.500,348 L1011,366.3 L1006,371 L1001,350 Z" fill="url(#gMainEl)" />
<path d="M1012.6,371.6 L1111.2,348.2 L1112.2,352 L1110,354.5 L1013.8,377.4Z" fill="#3a5630" />
<path d="M1013.2,374.5 L1111.8,351.3 L1110,354.5 L1013.8,377.4Z" fill="#263b20" />
<path d="M916.2,257.5 C915.7,253.5 924.2,258.7 925,258.9 C925.8,259.1 934.5,262.1 937.4,263.7 C940.3,265.3 994.8,297.8 997.3,299.9 C999.8,302 1000.6,315.3 1001,317.3 C1001.4,319.3 1006.8,347.6 1007.3,349.8 C1007.8,352 1011.6,368.3 1012.3,372.2 C1013,376.1 1025,444.1 1025.5,447.1 C1026,450.1 1026.6,449.1 1024.6,448.4 C1022.6,447.7 977.1,429.5 974.9,428.4 C972.7,427.3 971.3,424.5 969.9,422.1 C968.5,419.7 941.2,369.7 939.9,367.2 C938.6,364.7 938.3,364.2 937.4,359.8 C936.5,355.4 916.7,261.5 916.2,257.5Z" fill="url(#gEnd)" />
<path d="M1025,538 L1064,540" stroke="#38542e" stroke-width="3.2" stroke-linecap="round" fill="none"/>
<path d="M1025,538 L1064,540" stroke="#4c6d3e" stroke-width="1.8000000000000003" stroke-linecap="round" fill="none"/>
<path d="M1030,556 L1090,511" stroke="#38542e" stroke-width="3.2" stroke-linecap="round" fill="none"/>
<path d="M1030,556 L1090,511" stroke="#4c6d3e" stroke-width="1.8000000000000003" stroke-linecap="round" fill="none"/>
<path d="M1028,551 L1086,508.5" stroke="#38542e" stroke-width="3" stroke-linecap="round" fill="none"/>
<path d="M1028,551 L1086,508.5" stroke="#4c6d3e" stroke-width="1.6" stroke-linecap="round" fill="none"/>
<path d="M1035,569 L1062,564.5" stroke="#38542e" stroke-width="3.6" stroke-linecap="round" fill="none"/>
<path d="M1035,569 L1062,564.5" stroke="#4c6d3e" stroke-width="2.2" stroke-linecap="round" fill="none"/>
<path d="M1032,557 L1062,545" stroke="#38542e" stroke-width="3" stroke-linecap="round" fill="none"/>
<path d="M1032,557 L1062,545" stroke="#4c6d3e" stroke-width="1.6" stroke-linecap="round" fill="none"/>
<path d="M953.8,549.1 L954.2,543.3 L955.1,537.9 L956.4,533 L958.2,528.8 L960.3,525.2 L962.8,522.4 L965.6,520.3 L968.7,519.1 L1004,507.8 L1007.2,507.4 L1010.7,507.9 L1014.2,509.3 L1017.7,511.4 L1021.3,514.4 L1024.7,518 L1028,522.4 L1031.1,527.3 L1034,532.8 L1036.5,538.6 L1038.7,544.8 L1040.6,551.2 L1042,557.8 L1042.9,564.3 L1043.4,570.6 L1043.5,576.8 L1043.1,582.6 L1042.2,588 L1040.9,592.9 L1039.1,597.1 L1037,600.7 L1034.5,603.5 L1031.7,605.6 L1028.6,606.8 L993.3,618.1 L990.1,618.5 L986.6,618 L983.1,616.6 L979.6,614.5 L976,611.5 L972.6,607.9 L969.3,603.5 L966.2,598.6 L963.3,593.1 L960.8,587.2 L958.6,581.1 L956.7,574.6 L955.3,568.1 L954.4,561.6 L953.9,555.2Z" fill="url(#gTread1)" stroke="url(#gOut1)" stroke-width="1.3"/>
<ellipse cx="981" cy="568.6" rx="25" ry="51" transform="rotate(-14 981 568.6)" fill="url(#gSide1)" />
<ellipse cx="979.6" cy="569.6" rx="15.2" ry="34.2" transform="rotate(-14 979.6 569.6)" fill="url(#gRim1)" />
<path d="M1015.6,572.3 L1019.3,571.6 L1027.3,577.8 L1058,567 L1075,560 L1120,600 L1180,630 L1195,642 L1200,700 L1167,719.5 L1156.5,723.5 L1027.3,634.7 Z" fill="url(#gCyan)" />
<path d="M1062.5,516 C1061.5,514.4 1062.5,511.7 1062.8,511 C1063.1,510.3 1064.9,508.2 1066.2,508 C1067.5,507.8 1076.7,508.3 1078.7,508.6 C1080.7,508.9 1088.1,510.8 1089.9,511.7 C1091.7,512.6 1101.2,518.5 1100,520 C1098.8,521.5 1078.1,530.3 1075,530 C1071.9,529.7 1063.5,517.6 1062.5,516Z" fill="#43613a" />
<path d="M1086.2,504 C1086.2,501.5 1087,486 1087.4,483.6 C1087.8,481.2 1090.2,476.1 1091.2,474.9 C1092.2,473.7 1098.1,469.7 1099.9,468.7 C1101.7,467.7 1109.1,463.9 1112.4,462.4 C1115.7,460.9 1136.5,452.3 1139.8,451.2 C1143.1,450.1 1148.9,448.2 1152.3,448.7 C1155.7,449.2 1178.3,455.9 1181,457.4 C1183.7,458.9 1185.1,464.3 1184.7,466.2 C1184.3,468.1 1177.2,474.5 1176,480 C1174.8,485.5 1174.7,527.8 1170,532 C1165.3,536.2 1126.8,531.5 1120,530 C1113.2,528.5 1090.8,516.2 1088,514 C1085.2,511.8 1086.2,506.5 1086.2,504Z" fill="#3f5b33" />
<path d="M1112.4,462.4 C1113.7,461.2 1137.1,452.1 1139.8,451.2 C1142.5,450.3 1149.6,448.3 1152.3,448.7 C1155,449.1 1181.3,455.9 1181,457.4 C1180.7,458.9 1150.4,469.7 1147.3,471.2 C1144.2,472.7 1136.6,480.1 1134.8,479.9 C1133,479.7 1121.4,469.9 1119.9,468.7 C1118.4,467.5 1111.1,463.6 1112.4,462.4Z" fill="#39552f" />
<path d="M1147.3,471.2 C1149.7,469.3 1178.5,457.7 1181,457.4 C1183.5,457.1 1185.1,464.9 1184.7,466.2 C1184.3,467.5 1176,475.9 1174.8,477.4 C1173.6,478.9 1167.9,486.2 1167.3,488.6 C1166.7,491 1167,511.6 1166,513.6 C1165,515.6 1153.5,518.9 1152.3,518.6 C1151.1,518.3 1149.1,512 1148.6,509.8 C1148.1,507.6 1144.9,488.7 1144.8,486.1 C1144.7,483.5 1144.9,473.1 1147.3,471.2Z" fill="#456538" />
<path d="M1090,478 C1090.6,476.2 1097.1,470.9 1099.9,470 C1102.7,469.1 1114.8,467.9 1118,469 C1121.2,470.1 1130.8,478.4 1132,481 C1133.2,483.6 1132,494.5 1130,495 C1128,495.5 1115.6,486.7 1112,486 C1108.4,485.3 1096.2,488.8 1094,488 C1091.8,487.2 1089.4,479.8 1090,478Z" fill="#44633a" />
<path d="M1132.3,481 L1137.5,479 L1139.5,519 L1134.5,518 L1131.3,495Z" fill="#4a6b3c" />
<path d="M1092.400,501.200 L1122.400,506 L1123,518.500 L1091.200,513.500Z" fill="#3a5630"/>
<path d="M1092.400,501.200 L1122.400,506 L1122.400,508.500 L1092.200,504Z" fill="#33502a"/>
<circle cx="1122.700" cy="512.300" r="5.900" fill="#48693b"/>
<path d="M1166,489.9 C1166.8,487.2 1172.2,476.9 1174.8,474.9 C1177.4,472.9 1192.8,466.8 1197.2,466.2 C1201.6,465.6 1224.5,464.6 1227.2,467.4 C1229.9,470.2 1229.2,494.8 1229.6,499.6 C1230,504.4 1233.7,521.9 1232.2,524.8 C1230.8,527.7 1217.5,533.6 1212.2,534 C1206.9,534.4 1172.4,531.2 1168.5,529 C1164.6,526.8 1165.7,510.4 1165.5,507.1 C1165.3,503.8 1165.2,492.6 1166,489.9Z" fill="#405c33" />
<path d="M1166,489.9 C1166.8,487.2 1172.2,476.9 1174.8,474.9 C1177.4,472.9 1194.9,466.6 1197.2,466.2 C1199.5,465.8 1203.6,469 1203,470 C1202.4,471 1191.4,475.5 1190,478 C1188.6,480.5 1186.2,495.6 1186,500 C1185.8,504.4 1189,528.6 1187.5,531 C1186,533.4 1170.3,531 1168.5,529 C1166.7,527 1165.7,510.4 1165.5,507.1 C1165.3,503.8 1165.2,492.6 1166,489.9Z" fill="#3b5730" />
<ellipse cx="1211" cy="465.500" rx="14" ry="6" fill="#4a6b3c"/>
<path d="M1207.600,400 C1219,400 1227.500,414 1228,433 C1228.300,447 1225,458 1216,462.500 C1210,465 1204,464 1199.500,459 C1191,450 1187.300,440 1187.300,428 C1187.300,412 1196,400 1207.600,400Z" fill="url(#gHead)"/>
<path d="M1062.5,515 C1062.8,512.1 1063.5,509.7 1065,509 C1066.5,508.3 1080.7,504.1 1085,504.6 C1089.3,505.1 1124.4,515.4 1130,517 C1135.6,518.6 1163,527.2 1168.5,528.3 C1174,529.4 1208,533.5 1212.2,533.3 C1216.4,533.1 1228.3,525.2 1232,525 C1235.7,524.8 1262,531 1267.4,529.9 C1272.8,528.8 1308.8,509.3 1313.5,508.7 C1318.2,508.1 1335,519 1337.2,521.1 C1339.4,523.2 1344.6,538.3 1346,539.9 C1347.4,541.5 1356.6,544.9 1358.4,544.9 C1360.2,544.9 1368,538 1373.4,540.4 C1378.8,542.8 1430.6,574.4 1440,581 C1449.4,587.6 1507.8,634.3 1514.8,640 C1521.8,645.7 1540.8,662.6 1544.8,666.2 C1548.8,669.8 1571.5,690.7 1574.7,693.6 C1577.9,696.5 1590.7,708.2 1592.2,709.9 C1593.7,711.6 1597.1,718.6 1597.3,719.8 C1597.5,721 1596.5,727 1594.7,728.6 C1592.9,730.2 1573.4,742.2 1569.7,743.5 C1566,744.8 1543.8,747.9 1538.5,748.5 C1533.2,749.1 1491.8,749.9 1489.9,752.3 C1488,754.7 1508.8,782.5 1509.8,784.7 C1510.8,786.9 1507.5,787 1504.8,786 C1502.1,785 1474.2,772.1 1469.9,769.7 C1465.6,767.3 1443.3,753.2 1440,750 C1436.7,746.8 1421.8,725.4 1419.7,722.4 C1417.6,719.4 1411.2,704.7 1408.5,704.5 C1405.8,704.3 1382.9,719.2 1379.6,719.5 C1376.3,719.8 1363.4,710.3 1359.7,708.3 C1356,706.3 1329.3,692 1324.8,689.6 C1320.3,687.2 1295.6,673.6 1292.3,672.1 C1289,670.6 1278.4,665.2 1274.9,667.1 C1271.4,669 1245.7,698.5 1240,700 C1234.3,701.5 1195.2,692.4 1190,690 C1184.8,687.6 1166,666.1 1162.3,663.4 C1158.6,660.7 1138.6,651.9 1134.8,649.7 C1131,647.5 1108.2,632.4 1104.9,629.7 C1101.6,627 1087.3,612.6 1085,609.8 C1082.7,607 1071.5,590.1 1070,587.3 C1068.5,584.5 1063.2,569.6 1062.5,567.3 C1061.8,565 1060,555.9 1060,552.4 C1060,548.9 1062.2,517.9 1062.5,515Z" fill="#405c33" />
<path d="M1060.5,552 C1062.4,551.7 1086.1,561.4 1090.8,563 C1095.5,564.6 1126.2,573.7 1131.6,576 C1137,578.3 1168.8,595.7 1172.3,598 C1175.8,600.3 1183.4,609.7 1183.8,610.8 C1184.2,611.9 1179.4,613.4 1178.9,614 C1178.4,614.6 1176.6,617.7 1176,619.7 C1175.4,621.7 1170.6,641.8 1169.7,644.7 C1168.8,647.6 1164.6,663.1 1162.3,663.4 C1160,663.7 1138.6,651.9 1134.8,649.7 C1131,647.5 1108.2,632.4 1104.9,629.7 C1101.6,627 1087.3,612.6 1085,609.8 C1082.7,607 1071.5,590.1 1070,587.3 C1068.5,584.5 1063.1,569.7 1062.5,567.3 C1061.9,564.9 1058.6,552.3 1060.5,552Z" fill="url(#gSideBody)" />
<path d="M1128.3,520 C1130.2,518.9 1161.5,527.8 1168.5,529 C1175.5,530.2 1206.9,534.2 1212.2,534 C1217.5,533.8 1227.4,526.3 1232,526 C1236.6,525.7 1262.2,531.1 1267.4,530.5 C1272.7,529.9 1291.9,516.5 1295,519 C1298.1,521.5 1305.4,553.2 1305,560 C1304.6,566.8 1293.8,597.3 1290,600 C1286.2,602.7 1264.4,593.1 1260,592 C1255.6,590.9 1242.9,585.8 1237.6,586.4 C1232.3,587 1202.2,599.4 1196.8,599.4 C1191.4,599.4 1176.5,591.2 1172.3,586.4 C1168.1,581.6 1149.9,547.8 1146.2,542.3 C1142.5,536.8 1126.4,521.1 1128.3,520Z" fill="#44633a" />
<path d="M1063,541 C1063.4,540.2 1065,536.8 1066.3,535 C1067.5,533.2 1076,520.8 1078,519 C1080,517.2 1086.1,513.9 1090,514 C1093.9,514.1 1120.4,519.1 1124.9,520.5 C1129.5,521.9 1142.5,529 1144.6,531 C1146.7,533 1147,542.4 1150,545 C1153,547.6 1174.6,558.7 1180,562 C1185.4,565.3 1213.3,581.7 1214.7,584.8 C1216.1,587.9 1200.3,599.3 1196.8,599.4 C1193.3,599.5 1177.7,589.3 1172.3,586.4 C1166.9,583.5 1138.4,567.8 1131.6,565.1 C1124.8,562.4 1096.6,555.4 1090.8,553.7 C1085,552 1064.3,545.6 1062,544.5 C1059.7,543.4 1062.6,541.8 1063,541Z" fill="url(#gDeck)" />
<path d="M1061.4,545.5 C1063.9,545.3 1085,552.5 1090.8,554.2 C1096.6,555.9 1124.8,562.9 1131.6,565.6 C1138.4,568.3 1166.9,584.1 1172.3,587 C1177.7,589.9 1195.8,598 1196.8,600 C1197.8,602 1185.8,611.4 1183.8,611.5 C1181.8,611.6 1176.6,604.1 1172.3,601.5 C1168,598.9 1138.4,583.1 1131.6,580.3 C1124.8,577.4 1096.7,569.2 1090.8,567.3 C1084.9,565.4 1063,558.8 1060.5,557 C1058,555.2 1058.9,545.7 1061.4,545.5Z" fill="url(#gRidge)" />
<path d="M1145,524 L1168.5,528.3 L1211,534.2 L1230,526 L1266,530.3 L1256,534 L1222,539.5 L1180,534.5 L1150,529.5Z" fill="#2f4727" />
<path d="M1238.4,586.1 C1245.8,582.4 1284.8,561.1 1290,560 C1295.2,558.9 1311,566.3 1317,570 C1323,573.7 1371.8,609 1380,615 C1388.2,621 1432,654 1440,660 C1448,666 1496.7,698.8 1500,705 C1503.3,711.2 1489.2,747 1489.9,752.3 C1490.6,757.6 1511.1,783.5 1509.8,784.7 C1508.5,785.9 1474.6,772 1469.9,769.7 C1465.2,767.4 1444.1,754.3 1440,750 C1435.9,745.7 1412.5,706.5 1408.5,704.5 C1404.5,702.5 1385.2,720.5 1379.6,719.5 C1374,718.5 1331.8,693.1 1324.8,689.6 C1317.8,686.1 1280.6,666.4 1274.9,667.1 C1269.2,667.8 1245.7,698.5 1240,700 C1234.3,701.5 1194.3,694.4 1190,690 C1185.7,685.6 1176.7,639 1176,634 C1175.3,629 1175.5,618 1179.7,614.8 C1183.9,611.6 1231,589.8 1238.4,586.1Z" fill="#3e5a32" />
<path d="M1179.7,614.8 L1238.4,586.1 L1262,600 L1258,640 L1219.6,628.5 L1189.7,639.7 L1174.7,632.2 L1176,619.7Z" fill="#3f5b33" />
<path d="M1179.9,613.8 L1237.3,586.4" stroke="#2f4727" stroke-width="1.2" stroke-linecap="butt" fill="none"/>
<path d="M1267.4,529.9 L1313.6,508.7 L1337.9,520.6 L1301.1,539.9 L1283,534Z" fill="#3b5730" />
<path d="M1301.1,539.9 L1337.9,520.6 L1346,539.9 L1352,546 L1320,575 L1299.9,558Z" fill="#48693b" />
<path d="M1296.5,566 L1332,560 L1309,581Z" fill="#48693b" />
<path d="M1298,573 L1322,568.5 L1308.6,582Z" fill="#38542e" />
<path d="M1297.400,552.400 L1353.500,539 Q1358,539.500 1358.500,545 L1304.900,566.100Z" fill="url(#gCyl)"/>
<ellipse cx="1301" cy="559.300" rx="3.600" ry="7.200" transform="rotate(-16 1301 559.300)" fill="#3f5b33"/>
<path d="M1352,547 C1353.9,546.3 1357,545.9 1358.4,545.5 C1359.8,545.1 1368,538 1373.4,540.4 C1378.8,542.8 1430.6,574.4 1440,581 C1449.4,587.6 1507.8,634.3 1514.8,640 C1521.8,645.7 1540.8,662.6 1544.8,666.2 C1548.8,669.8 1571.5,690.7 1574.7,693.6 C1577.9,696.5 1590.7,708.2 1592.2,709.9 C1593.7,711.6 1597.1,718.6 1597.3,719.8 C1597.5,721 1596.5,727 1594.7,728.6 C1592.9,730.2 1573.4,742.2 1569.7,743.5 C1566,744.8 1543.8,747.9 1538.5,748.5 C1533.2,749.1 1495.3,753.8 1489.9,752.3 C1484.5,750.8 1461.7,729.5 1457,726 C1452.3,722.5 1425.1,704.7 1420,700 C1414.9,695.3 1385.7,661 1380,655 C1374.3,649 1339.5,614.7 1335,610 C1330.5,605.3 1312.3,587.6 1312,584 C1311.7,580.4 1327.3,558.5 1330,556 C1332.7,553.5 1350.1,547.7 1352,547Z" fill="url(#gNose)" />
<path d="M1389.8,680.9 C1389,677.6 1414.4,687.1 1420,690 C1425.6,692.9 1451.2,710.8 1457,716 C1462.8,721.2 1485.5,746.6 1489.9,752.3 C1494.3,758 1511.5,783.2 1509.8,784.7 C1508.1,786.2 1476.6,774.3 1469.9,769.7 C1463.2,765.1 1436.7,737.4 1430,730 C1423.3,722.6 1390.6,684.2 1389.8,680.9Z" fill="#39552f" />
<path d="M1389.8,680.9 C1390.1,679.6 1407.7,686.7 1412,689 C1416.3,691.3 1436.5,704.1 1441,708 C1445.5,711.9 1461.8,731.5 1466,736 C1470.2,740.5 1487.3,757.9 1491,762 C1494.7,766.1 1508.6,782.7 1509.8,784.7 C1511,786.7 1507.8,787.5 1504.8,786 C1501.8,784.5 1479.5,769.9 1474,766.5 C1468.5,763.1 1442.9,748.7 1438.4,745 C1433.9,741.3 1422.2,725.8 1419.7,722.4 C1417.2,719 1411,708 1408.5,704.5 C1406,701 1389.5,682.2 1389.8,680.9Z" fill="#44633a" />
<path d="M1371,788.6 C1370.1,781.9 1434.2,750.1 1439.7,748.6 C1445.2,747.1 1459,763.7 1462,764 C1465,764.3 1485.3,754.9 1489.9,754 C1494.5,753.1 1531.6,748.9 1538.5,749.8 C1545.4,750.7 1599.5,767.8 1604.6,769.7 C1609.7,771.6 1622.4,781 1623.3,782.2 C1624.2,783.4 1621.6,787.9 1619.6,789.7 C1617.6,791.5 1592.7,810.5 1589.7,812.2 C1586.7,813.9 1577,813.5 1569.7,818.4 C1562.4,823.3 1475,888.8 1468.4,893.3 C1461.8,897.8 1460.8,895 1460,893 C1459.2,891 1460.3,866.3 1455,860 C1449.7,853.7 1371.9,795.3 1371,788.6Z" fill="url(#gPlane)" />
<path d="M1389.8,680.9 C1389,677.6 1414.4,687.1 1420,690 C1425.6,692.9 1451.2,710.8 1457,716 C1462.8,721.2 1485.5,746.6 1489.9,752.3 C1494.3,758 1511.5,783.2 1509.8,784.7 C1508.1,786.2 1476.6,774.3 1469.9,769.7 C1463.2,765.1 1436.7,737.4 1430,730 C1423.3,722.6 1390.6,684.2 1389.8,680.9Z" fill="#39552f" />
<path d="M1389.8,680.9 C1390.1,679.6 1407.7,686.7 1412,689 C1416.3,691.3 1436.5,704.1 1441,708 C1445.5,711.9 1461.8,731.5 1466,736 C1470.2,740.5 1487.3,757.9 1491,762 C1494.7,766.1 1508.6,782.7 1509.8,784.7 C1511,786.7 1507.8,787.5 1504.8,786 C1501.8,784.5 1479.5,769.9 1474,766.5 C1468.5,763.1 1442.9,748.7 1438.4,745 C1433.9,741.3 1422.2,725.8 1419.7,722.4 C1417.2,719 1411,708 1408.5,704.5 C1406,701 1389.5,682.2 1389.8,680.9Z" fill="#44633a" />
<path d="M1509,783 L1575,806" stroke="#1f3019" stroke-width="7" stroke-linecap="round" filter="url(#bl)" opacity="0.75"/>
<path d="M1498.6,717.3 L1531,790.9" stroke="#38542e" stroke-width="4.4" stroke-linecap="round" fill="none"/>
<path d="M1498.6,717.3 L1531,790.9" stroke="#4c6d3e" stroke-width="3.0000000000000004" stroke-linecap="round" fill="none"/>
<path d="M1319,757 L1322.4,751.1 L1408.5,704.5 L1419.7,722.4 L1439.7,748.6 L1371,788.6 L1366,795Z" fill="#48693b" />
<path d="M1288,739.9 C1288.6,738.3 1300.7,740.5 1302.4,741.1 C1304.1,741.7 1319,750.1 1322.4,752.4 C1325.8,754.7 1364.9,783.9 1369.8,787.3 C1374.7,790.7 1415.2,816.3 1419.7,819.7 C1424.2,823.1 1457.2,852.5 1459.6,854.7 C1462,857 1466.7,862.8 1467.1,864.7 C1467.5,866.6 1468.4,890.7 1468.4,893.3 C1468.4,895.9 1468,914.5 1467.6,915.8 C1467.2,917.1 1460.4,918.8 1459.6,919 C1458.8,919.2 1453,920.2 1452.1,920 C1451.2,919.8 1446.3,918.6 1442.2,915.8 C1438.1,913 1375.9,869 1369.8,864.7 C1363.7,860.4 1323.3,832.2 1319.9,829.7 C1316.5,827.2 1303.7,816.4 1302.4,814.8 C1301.1,813.2 1294.3,799.4 1293.7,797.3 C1293.1,795.2 1291.5,775.2 1291.2,772.3 C1290.9,769.4 1287.4,741.5 1288,739.9Z" fill="#3f5b32" />
<path d="M1288,739.9 C1288.7,737.8 1300.9,739.8 1302.4,741.1 C1303.9,742.4 1309.4,756.1 1310,760 C1310.6,763.9 1311.3,795.4 1312,800 C1312.7,804.6 1320.5,828.7 1319.9,829.7 C1319.3,830.7 1304.1,817 1302.4,814.8 C1300.7,812.6 1294.4,800.1 1293.7,797.3 C1293,794.5 1291.6,776.1 1291.2,772.3 C1290.8,768.5 1287.3,742 1288,739.9Z" fill="#466739" />
<path d="M1319.9,829.7 L1312,815 L1322,822 L1445,909 L1463,913 L1467.6,915.8 L1459.6,919 L1452.1,920 L1442.2,915.8 L1369.8,864.7Z" fill="#354f2b" />
<path d="M1169.7,645.5 L1176,634.7 L1189,640.5 L1183,650 L1171,652Z" fill="#12b0e2" />
<path d="M1259.7,649.8 L1283.4,581.2" stroke="#38542e" stroke-width="4.6" stroke-linecap="round" fill="none"/>
<path d="M1259.7,649.8 L1283.4,581.2" stroke="#4c6d3e" stroke-width="3.1999999999999997" stroke-linecap="round" fill="none"/>
<path d="M1283.4,581.2 L1299.6,560" stroke="#38542e" stroke-width="4.6" stroke-linecap="round" fill="none"/>
<path d="M1283.4,581.2 L1299.6,560" stroke="#4c6d3e" stroke-width="3.1999999999999997" stroke-linecap="round" fill="none"/>
<path d="M1272.7,668.5 L1345.8,669" stroke="#38542e" stroke-width="4.2" stroke-linecap="round" fill="none"/>
<path d="M1272.7,668.5 L1345.8,669" stroke="#4c6d3e" stroke-width="2.8000000000000003" stroke-linecap="round" fill="none"/>
<path d="M1284.7,702.2 L1325.8,688.5" stroke="#38542e" stroke-width="4.8" stroke-linecap="round" fill="none"/>
<path d="M1284.7,702.2 L1325.8,688.5" stroke="#4c6d3e" stroke-width="3.4" stroke-linecap="round" fill="none"/>
<path d="M1287.2,717.2 L1362,709.5" stroke="#38542e" stroke-width="4.8" stroke-linecap="round" fill="none"/>
<path d="M1287.2,717.2 L1362,709.5" stroke="#4c6d3e" stroke-width="3.4" stroke-linecap="round" fill="none"/>
<path d="M1158.5,682 L1159,674.1 L1160.2,666.9 L1162.2,660.5 L1164.8,654.9 L1168.2,650.3 L1172.1,646.7 L1176.6,644.2 L1214.6,629.7 L1219.6,628.4 L1224.9,628.2 L1230.5,629.2 L1236.3,631.4 L1242.2,634.6 L1248.1,639 L1253.9,644.3 L1259.4,650.5 L1264.7,657.5 L1269.5,665.1 L1273.9,673.3 L1277.8,681.9 L1281,690.7 L1283.5,699.7 L1285.3,708.5 L1286.4,717.2 L1286.7,725.5 L1286.2,733.4 L1285,740.6 L1283,747 L1280.4,752.6 L1277,757.2 L1273.1,760.8 L1268.6,763.3 L1230.6,777.8 L1225.6,779.1 L1220.3,779.3 L1214.7,778.3 L1208.9,776.1 L1203,772.9 L1197.1,768.5 L1191.3,763.2 L1185.8,757 L1180.5,750 L1175.7,742.4 L1171.3,734.2 L1167.4,725.6 L1164.2,716.8 L1161.7,707.8 L1159.9,699 L1158.8,690.3Z" fill="url(#gTread2)" stroke="url(#gOut2)" stroke-width="1.4"/>
<ellipse cx="1203.6" cy="711" rx="39" ry="72" transform="rotate(-22 1203.6 711)" fill="url(#gSide2)" />
<ellipse cx="1200.3" cy="714.8" rx="24.8" ry="44.6" transform="rotate(-22 1200.3 714.8)" fill="url(#gRim2)" />
<path d="M1181,323 C1169,325 1160,336 1155,350 C1152,362 1152,372 1148.500,400 L1143.500,450 L1139.800,489.600 L1143.500,523" fill="none" stroke="#35502b" stroke-width="6.800" stroke-linecap="round" stroke-linejoin="round"/>
<path d="M1181,323 C1169,325 1160,336 1155,350 C1152,362 1152,372 1148.500,400 L1143.500,450 L1139.800,489.600 L1143.500,523" fill="none" stroke="#4b6c3d" stroke-width="4.200" stroke-linecap="round" stroke-linejoin="round"/>
<path d="M1150.5,373 L1123.6,462.2" stroke="#38542e" stroke-width="5" stroke-linecap="round" fill="none"/>
<path d="M1150.5,373 L1123.6,462.2" stroke="#4c6d3e" stroke-width="3.6" stroke-linecap="round" fill="none"/>
</g></svg>
<!-- scene -->
<div class="a" style="left:1629px;top:142px;width:250px;height:600px;background:#f2f2f2;border:1px solid #b5d9e8;border-radius:2px 2px 2px 4px"></div>
<div class="a" style="left:1863px;top:143px;width:15px;height:584px;background:linear-gradient(90deg,#e0e0e0,#f0f0f0 55%,#f6f6f6)"></div>
<div class="a" style="left:1866px;top:146px;width:9px;height:384px;border:1px solid #9a9a9a;border-radius:5px;background:linear-gradient(90deg,#e9e9e9,#dadada)"></div>
<svg style="left:1864px;top:727px" width="14" height="14" viewBox="0 0 14 14"><rect width="14" height="14" fill="#f8f8f8"/><path d="M1.500 13.500L13.500 1.500M5.500 13.500L13.500 5.500M9.500 13.500L13.500 9.500" stroke="#999" stroke-width="1"/></svg>
<svg style="left:1642px;top:155.5px" width="9" height="9" viewBox="0 0 9 9"><rect x="0.5" y="0.5" width="8" height="8" rx="1.200" fill="#f4f4fb" stroke="#3a3fb0" stroke-width="1"/><path d="M2.200 4.500H6.800" stroke="#2a2f9a" stroke-width="1.100"/></svg>
<div class="t" style="left:1654px;top:152px;font-size:11px;letter-spacing:-0.56px;color:#4b97c1">Scene</div>
<svg style="left:1658px;top:174.5px" width="9" height="9" viewBox="0 0 9 9"><rect x="0.5" y="0.5" width="8" height="8" rx="1.200" fill="#f4f4fb" stroke="#3a3fb0" stroke-width="1"/><path d="M2.200 4.500H6.800" stroke="#2a2f9a" stroke-width="1.100"/></svg>
<div class="t" style="left:1670.5px;top:171px;font-size:11px;letter-spacing:-0.36px;color:#4b97c1">FSAE Full Car mesh</div>
<svg style="left:1674.5px;top:194.5px" width="9" height="9" viewBox="0 0 9 9"><rect x="0.5" y="0.5" width="8" height="8" rx="1.200" fill="#f4f4fb" stroke="#3a3fb0" stroke-width="1"/><path d="M2.200 4.500H6.800M4.500 2.200V6.800" stroke="#2a2f9a" stroke-width="1.100"/></svg>
<svg style="left:1688px;top:193.5px" width="13" height="9" viewBox="0 0 13 9"><path d="M0.500 4.500C2.500 1.600 4.300 0.700 6.500 0.700S10.500 1.600 12.500 4.500C10.500 7.400 8.700 8.300 6.500 8.300S2.500 7.400 0.500 4.500z" fill="#f2f2f2" stroke="#6e6e64" stroke-width="1.100"/><circle cx="6.500" cy="4.200" r="2.700" fill="#6e6e64"/><circle cx="5.600" cy="3.300" r="0.800" fill="#f2f2f2"/></svg>
<div class="t" style="left:1704px;top:191px;font-size:11px;letter-spacing:0.04px;color:#4b97c1">FrontWheelZone</div>
<svg style="left:1674.5px;top:214.5px" width="9" height="9" viewBox="0 0 9 9"><rect x="0.5" y="0.5" width="8" height="8" rx="1.200" fill="#f4f4fb" stroke="#3a3fb0" stroke-width="1"/><path d="M2.200 4.500H6.800M4.500 2.200V6.800" stroke="#2a2f9a" stroke-width="1.100"/></svg>
<svg style="left:1688px;top:213.5px" width="13" height="9" viewBox="0 0 13 9"><path d="M0.500 4.500C2.500 1.600 4.300 0.700 6.500 0.700S10.500 1.600 12.500 4.500C10.500 7.400 8.700 8.300 6.500 8.300S2.500 7.400 0.500 4.500z" fill="#f2f2f2" stroke="#6e6e64" stroke-width="1.100"/><circle cx="6.500" cy="4.200" r="2.700" fill="#6e6e64"/><circle cx="5.600" cy="3.300" r="0.800" fill="#f2f2f2"/></svg>
<div class="t" style="left:1704px;top:211px;font-size:11px;letter-spacing:-0.18px;color:#4b97c1">RadiatorZone</div>
<svg style="left:1674.5px;top:234.5px" width="9" height="9" viewBox="0 0 9 9"><rect x="0.5" y="0.5" width="8" height="8" rx="1.200" fill="#f4f4fb" stroke="#3a3fb0" stroke-width="1"/><path d="M2.200 4.500H6.800M4.500 2.200V6.800" stroke="#2a2f9a" stroke-width="1.100"/></svg>
<svg style="left:1688px;top:233.5px" width="13" height="9" viewBox="0 0 13 9"><path d="M0.500 4.500C2.500 1.600 4.300 0.700 6.500 0.700S10.500 1.600 12.500 4.500C10.500 7.400 8.700 8.300 6.500 8.300S2.500 7.400 0.500 4.500z" fill="#f2f2f2" stroke="#6e6e64" stroke-width="1.100"/><circle cx="6.500" cy="4.200" r="2.700" fill="#6e6e64"/><circle cx="5.600" cy="3.300" r="0.800" fill="#f2f2f2"/></svg>
<div class="t" style="left:1704px;top:231px;font-size:11px;letter-spacing:-0.12px;color:#4b97c1">RearWheelZone</div>
<svg style="left:1674.5px;top:254.5px" width="9" height="9" viewBox="0 0 9 9"><rect x="0.5" y="0.5" width="8" height="8" rx="1.200" fill="#f4f4fb" stroke="#3a3fb0" stroke-width="1"/><path d="M2.200 4.500H6.800" stroke="#2a2f9a" stroke-width="1.100"/></svg>
<svg style="left:1688px;top:253.5px" width="13" height="9" viewBox="0 0 13 9"><path d="M0.500 4.500C2.500 1.600 4.300 0.700 6.500 0.700S10.500 1.600 12.500 4.500C10.500 7.400 8.700 8.300 6.500 8.300S2.500 7.400 0.500 4.500z" fill="#f2f2f2" stroke="#6e6e64" stroke-width="1.100"/><circle cx="6.500" cy="4.200" r="2.700" fill="#6e6e64"/><circle cx="5.600" cy="3.300" r="0.800" fill="#f2f2f2"/></svg>
<div class="t" style="left:1704px;top:251px;font-size:11px;letter-spacing:0.04px;color:#4b97c1">region0</div>
<svg style="left:1710.5px;top:276.5px" width="13" height="9" viewBox="0 0 13 9"><path d="M0.500 4.500C2.500 1.600 4.300 0.700 6.500 0.700S10.500 1.600 12.500 4.500C10.500 7.400 8.700 8.300 6.500 8.300S2.500 7.400 0.500 4.500z" fill="#f2f2f2" stroke="#b9b9b9" stroke-width="1.100"/><circle cx="6.500" cy="4.200" r="2.700" fill="#b9b9b9"/><circle cx="5.600" cy="3.300" r="0.800" fill="#f2f2f2"/></svg>
<div class="t" style="left:1727px;top:274px;font-size:11px;letter-spacing:-0.15px;color:#c9c9c9">boundingBox1</div>
<svg style="left:1710.5px;top:302.5px" width="13" height="9" viewBox="0 0 13 9"><path d="M0.500 4.500C2.500 1.600 4.300 0.700 6.500 0.700S10.500 1.600 12.500 4.500C10.500 7.400 8.700 8.300 6.500 8.300S2.500 7.400 0.500 4.500z" fill="#f2f2f2" stroke="#b9b9b9" stroke-width="1.100"/><circle cx="6.500" cy="4.200" r="2.700" fill="#b9b9b9"/><circle cx="5.600" cy="3.300" r="0.800" fill="#f2f2f2"/></svg>
<div class="t" style="left:1727px;top:300px;font-size:11px;letter-spacing:-0.15px;color:#c9c9c9">boundingBox2</div>
<svg style="left:1710.5px;top:328.5px" width="13" height="9" viewBox="0 0 13 9"><path d="M0.500 4.500C2.500 1.600 4.300 0.700 6.500 0.700S10.500 1.600 12.500 4.500C10.500 7.400 8.700 8.300 6.500 8.300S2.500 7.400 0.500 4.500z" fill="#f2f2f2" stroke="#b9b9b9" stroke-width="1.100"/><circle cx="6.500" cy="4.200" r="2.700" fill="#b9b9b9"/><circle cx="5.600" cy="3.300" r="0.800" fill="#f2f2f2"/></svg>
<div class="t" style="left:1727px;top:326px;font-size:11px;letter-spacing:-0.15px;color:#c9c9c9">boundingBox3</div>
<svg style="left:1710.5px;top:354.5px" width="13" height="9" viewBox="0 0 13 9"><path d="M0.500 4.500C2.500 1.600 4.300 0.700 6.500 0.700S10.500 1.600 12.500 4.500C10.500 7.400 8.700 8.300 6.500 8.300S2.500 7.400 0.500 4.500z" fill="#f2f2f2" stroke="#b9b9b9" stroke-width="1.100"/><circle cx="6.500" cy="4.200" r="2.700" fill="#b9b9b9"/><circle cx="5.600" cy="3.300" r="0.800" fill="#f2f2f2"/></svg>
<div class="t" style="left:1727px;top:352px;font-size:11px;letter-spacing:-0.15px;color:#c9c9c9">boundingBox4</div>
<svg style="left:1710.5px;top:380.5px" width="13" height="9" viewBox="0 0 13 9"><path d="M0.500 4.500C2.500 1.600 4.300 0.700 6.500 0.700S10.500 1.600 12.500 4.500C10.500 7.400 8.700 8.300 6.500 8.300S2.500 7.400 0.500 4.500z" fill="#f2f2f2" stroke="#b9b9b9" stroke-width="1.100"/><circle cx="6.500" cy="4.200" r="2.700" fill="#b9b9b9"/><circle cx="5.600" cy="3.300" r="0.800" fill="#f2f2f2"/></svg>
<div class="t" style="left:1727px;top:378px;font-size:11px;letter-spacing:-0.15px;color:#c9c9c9">boundingBox5</div>
<svg style="left:1710.5px;top:406.5px" width="13" height="9" viewBox="0 0 13 9"><path d="M0.500 4.500C2.500 1.600 4.300 0.700 6.500 0.700S10.500 1.600 12.500 4.500C10.500 7.400 8.700 8.300 6.500 8.300S2.500 7.400 0.500 4.500z" fill="#f2f2f2" stroke="#b9b9b9" stroke-width="1.100"/><circle cx="6.500" cy="4.200" r="2.700" fill="#b9b9b9"/><circle cx="5.600" cy="3.300" r="0.800" fill="#f2f2f2"/></svg>
<div class="t" style="left:1727px;top:404px;font-size:11px;letter-spacing:-0.15px;color:#c9c9c9">boundingBox6</div>
<svg style="left:1710.5px;top:432.5px" width="13" height="9" viewBox="0 0 13 9"><path d="M0.500 4.500C2.500 1.600 4.300 0.700 6.500 0.700S10.500 1.600 12.500 4.500C10.500 7.400 8.700 8.300 6.500 8.300S2.500 7.400 0.500 4.500z" fill="#f2f2f2" stroke="#6e6e64" stroke-width="1.100"/><circle cx="6.500" cy="4.200" r="2.700" fill="#6e6e64"/><circle cx="5.600" cy="3.300" r="0.800" fill="#f2f2f2"/></svg>
<div class="t" style="left:1727px;top:430px;font-size:11px;letter-spacing:-0.23px;color:#4b97c1">solid_0_RWflapa</div>
<svg style="left:1710.5px;top:458.5px" width="13" height="9" viewBox="0 0 13 9"><path d="M0.500 4.500C2.500 1.600 4.300 0.700 6.500 0.700S10.500 1.600 12.500 4.500C10.500 7.400 8.700 8.300 6.500 8.300S2.500 7.400 0.500 4.500z" fill="#f2f2f2" stroke="#6e6e64" stroke-width="1.100"/><circle cx="6.500" cy="4.200" r="2.700" fill="#6e6e64"/><circle cx="5.600" cy="3.300" r="0.800" fill="#f2f2f2"/></svg>
<div class="t" style="left:1727px;top:456px;font-size:11px;letter-spacing:-0.18px;color:#4b97c1">solid_0_body</div>
<svg style="left:1710.5px;top:484.5px" width="13" height="9" viewBox="0 0 13 9"><path d="M0.500 4.500C2.500 1.600 4.300 0.700 6.500 0.700S10.500 1.600 12.500 4.500C10.500 7.400 8.700 8.300 6.500 8.300S2.500 7.400 0.500 4.500z" fill="#f2f2f2" stroke="#6e6e64" stroke-width="1.100"/><circle cx="6.500" cy="4.200" r="2.700" fill="#6e6e64"/><circle cx="5.600" cy="3.300" r="0.800" fill="#f2f2f2"/></svg>
<div class="t" style="left:1727px;top:482px;font-size:11px;letter-spacing:-0.20px;color:#4b97c1">solid_0_RWflapb</div>
<svg style="left:1710.5px;top:510.5px" width="13" height="9" viewBox="0 0 13 9"><path d="M0.500 4.500C2.500 1.600 4.300 0.700 6.500 0.700S10.500 1.600 12.500 4.500C10.500 7.400 8.700 8.300 6.500 8.300S2.500 7.400 0.500 4.500z" fill="#f2f2f2" stroke="#6e6e64" stroke-width="1.100"/><circle cx="6.500" cy="4.200" r="2.700" fill="#6e6e64"/><circle cx="5.600" cy="3.300" r="0.800" fill="#f2f2f2"/></svg>
<div class="t" style="left:1727px;top:508px;font-size:11px;letter-spacing:-0.21px;color:#4b97c1">solid_0_RWflapc</div>
<svg style="left:1710.5px;top:536.5px" width="13" height="9" viewBox="0 0 13 9"><path d="M0.500 4.500C2.500 1.600 4.300 0.700 6.500 0.700S10.500 1.600 12.500 4.500C10.500 7.400 8.700 8.300 6.500 8.300S2.500 7.400 0.500 4.500z" fill="#f2f2f2" stroke="#6e6e64" stroke-width="1.100"/><circle cx="6.500" cy="4.200" r="2.700" fill="#6e6e64"/><circle cx="5.600" cy="3.300" r="0.800" fill="#f2f2f2"/></svg>
<div class="t" style="left:1727px;top:534px;font-size:11px;letter-spacing:-0.20px;color:#4b97c1">solid_0_RWflapd</div>
<svg style="left:1710.5px;top:562.5px" width="13" height="9" viewBox="0 0 13 9"><path d="M0.500 4.500C2.500 1.600 4.300 0.700 6.500 0.700S10.500 1.600 12.500 4.500C10.500 7.400 8.700 8.300 6.500 8.300S2.500 7.400 0.500 4.500z" fill="#f2f2f2" stroke="#6e6e64" stroke-width="1.100"/><circle cx="6.500" cy="4.200" r="2.700" fill="#6e6e64"/><circle cx="5.600" cy="3.300" r="0.800" fill="#f2f2f2"/></svg>
<div class="t" style="left:1727px;top:560px;font-size:11px;letter-spacing:-0.23px;color:#4b97c1">solid_0_Radsupport</div>
<svg style="left:1710.5px;top:588.5px" width="13" height="9" viewBox="0 0 13 9"><path d="M0.500 4.500C2.500 1.600 4.300 0.700 6.500 0.700S10.500 1.600 12.500 4.500C10.500 7.400 8.700 8.300 6.500 8.300S2.500 7.400 0.500 4.500z" fill="#f2f2f2" stroke="#6e6e64" stroke-width="1.100"/><circle cx="6.500" cy="4.200" r="2.700" fill="#6e6e64"/><circle cx="5.600" cy="3.300" r="0.800" fill="#f2f2f2"/></svg>
<div class="t" style="left:1727px;top:586px;font-size:11px;letter-spacing:-0.32px;color:#4b97c1">solid_0_Rearsusp</div>
<svg style="left:1710.5px;top:614.5px" width="13" height="9" viewBox="0 0 13 9"><path d="M0.500 4.500C2.500 1.600 4.300 0.700 6.500 0.700S10.500 1.600 12.500 4.500C10.500 7.400 8.700 8.300 6.500 8.300S2.500 7.400 0.500 4.500z" fill="#f2f2f2" stroke="#6e6e64" stroke-width="1.100"/><circle cx="6.500" cy="4.200" r="2.700" fill="#6e6e64"/><circle cx="5.600" cy="3.300" r="0.800" fill="#f2f2f2"/></svg>
<div class="t" style="left:1727px;top:612px;font-size:11px;letter-spacing:-0.15px;color:#4b97c1">solid_0_Reartire</div>
<svg style="left:1710.5px;top:640.5px" width="13" height="9" viewBox="0 0 13 9"><path d="M0.500 4.500C2.500 1.600 4.300 0.700 6.500 0.700S10.500 1.600 12.500 4.500C10.500 7.400 8.700 8.300 6.500 8.300S2.500 7.400 0.500 4.500z" fill="#f2f2f2" stroke="#6e6e64" stroke-width="1.100"/><circle cx="6.500" cy="4.200" r="2.700" fill="#6e6e64"/><circle cx="5.600" cy="3.300" r="0.800" fill="#f2f2f2"/></svg>
<div class="t" style="left:1727px;top:638px;font-size:11px;letter-spacing:-0.22px;color:#4b97c1">solid_0_ReartireCP</div>
<svg style="left:1710.5px;top:666.5px" width="13" height="9" viewBox="0 0 13 9"><path d="M0.500 4.500C2.500 1.600 4.300 0.700 6.500 0.700S10.500 1.600 12.500 4.500C10.500 7.400 8.700 8.300 6.500 8.300S2.500 7.400 0.500 4.500z" fill="#f2f2f2" stroke="#6e6e64" stroke-width="1.100"/><circle cx="6.500" cy="4.200" r="2.700" fill="#6e6e64"/><circle cx="5.600" cy="3.300" r="0.800" fill="#f2f2f2"/></svg>
<div class="t" style="left:1727px;top:664px;font-size:11px;letter-spacing:-0.28px;color:#4b97c1">solid_0_Rearur</div>
<svg style="left:1710.5px;top:692.5px" width="13" height="9" viewBox="0 0 13 9"><path d="M0.500 4.500C2.500 1.600 4.300 0.700 6.500 0.700S10.500 1.600 12.500 4.500C10.500 7.400 8.700 8.300 6.500 8.300S2.500 7.400 0.500 4.500z" fill="#f2f2f2" stroke="#6e6e64" stroke-width="1.100"/><circle cx="6.500" cy="4.200" r="2.700" fill="#6e6e64"/><circle cx="5.600" cy="3.300" r="0.800" fill="#f2f2f2"/></svg>
<div class="t" style="left:1727px;top:690px;font-size:11px;letter-spacing:-0.22px;color:#4b97c1">solid_0_Sidepood</div>
<svg style="left:1710.5px;top:718.5px" width="13" height="9" viewBox="0 0 13 9"><path d="M0.500 4.500C2.500 1.600 4.300 0.700 6.500 0.700S10.500 1.600 12.500 4.500C10.500 7.400 8.700 8.300 6.500 8.300S2.500 7.400 0.500 4.500z" fill="#f2f2f2" stroke="#6e6e64" stroke-width="1.100"/><circle cx="6.500" cy="4.200" r="2.700" fill="#6e6e64"/><circle cx="5.600" cy="3.300" r="0.800" fill="#f2f2f2"/></svg>
<div class="t" style="left:1727px;top:716px;font-size:11px;letter-spacing:-0.36px;color:#4b97c1">solid_0_RWEP</div>
<!-- cube -->
<svg style="left:0;top:0" width="1919" height="1042" viewBox="0 0 1919 1042">
<!-- bottom status bar -->
<rect x="782" y="1016" width="198.500" height="16" fill="#e3e3e3" stroke="#c3dbe3" stroke-width="0.900"/>
<rect x="966" y="1016.500" width="14" height="15" fill="#ececec"/>
<path d="M968,1031.500 L980,1019.500 M972,1031.500 L980,1023.500 M976,1031.500 L980,1027.500" stroke="#b5b5b5" stroke-width="1"/>
<!-- arrows -->
<g fill="#dedede" stroke="#bdbdbd" stroke-width="1.200" stroke-linejoin="miter">
<path d="M851.500,844 L870.500,844 L861,834.500Z"/>
<path d="M851.500,976 L870.500,976 L861,985.500Z"/>
<path d="M795.300,900.500 L795.300,919.500 L785.500,909.800Z"/>
<path d="M926.800,900.500 L926.800,919.500 L936.800,909.800Z"/>
<path d="M913.800,973.800 L923.200,964.800 L932.600,973.800 L929.300,973.800 L929.300,982.300 L925.300,982.300 L925.300,976.500 L921.100,976.500 L921.100,982.300 L917.100,982.300 L917.100,973.800Z"/>
<path d="M783.500,950 L790.500,942 L797.500,950 L794,950 C794,958 796,964 801.500,969.500 L796.500,974 C790,968 787,959 787,950Z"/>
<path d="M798,977 L802,970 C808,974 814,975.500 821,975 L821,971.500 L829,979.500 L821.500,987.500 L821.500,983.500 C812,984 804,982 798,977Z"/>
</g>
<!-- x axis (faint) -->
<path d="M906.400,936.800 L856,913" stroke="#e7c4c4" stroke-width="1.200"/>
<!-- cube -->
<g fill="#e7e7e7" fill-opacity="0.92" stroke="#8a8a8a" stroke-width="1.300" stroke-linejoin="round">
<path d="M861.200,864.400 L905.500,878.700 L856.900,899.200 L813,881.900Z"/>
<path d="M813,881.900 L856.900,899.200 L860.100,961.100 L819.400,938.900Z"/>
<path d="M856.900,899.200 L905.500,878.700 L906.400,936.800 L860.100,961.100Z"/>
</g>
<path d="M904,934.500 L858,912.500" stroke="#eccaca" stroke-width="1" opacity="0.7"/>
<text x="853" y="915.500" font-family="Liberation Sans" font-size="9" fill="#ecc6c6" text-anchor="middle">X</text>
<!-- labels -->
<g font-family="Liberation Sans" font-weight="bold" fill="#7c7c7c" text-anchor="middle">
<text transform="translate(858.600,878.300) rotate(196) skewX(-20)" font-size="6.300" letter-spacing="0.400">FRONT</text>
<text transform="translate(836.500,920) rotate(199) skewX(6)" font-size="7" letter-spacing="0.200">TOP</text>
<text transform="translate(885.800,921) rotate(-82) skewX(-8)" font-size="7.800" letter-spacing="0.100">LEFT</text>
</g>
<!-- z axis -->
<path d="M906.400,936.800 L906.400,872" stroke="#8585e6" stroke-width="1.800"/>
<path d="M906.400,867.500 L904.300,874 L908.500,874Z" fill="#8585e6"/>
<text x="906" y="863.800" font-family="Liberation Sans" font-weight="bold" font-size="13" fill="#8585e6" text-anchor="middle">Z</text>
<!-- y axis -->
<path d="M906.400,936.800 L859,961.600" stroke="#72d072" stroke-width="1.800"/>
<path d="M852.800,965.800 L857.800,960 L860.500,964.300Z" fill="#72d072"/>
<text x="845" y="973.600" font-family="Liberation Sans" font-weight="bold" font-size="13" fill="#72d072" text-anchor="middle">Y</text>
</svg>

<!-- bottom -->
<div class="a" style="left:1664px;top:1012px;width:146px;height:30px;background:#005b9a;border-radius:3px 3px 0 0"></div>
<div class="a" style="left:1812px;top:1012px;width:78px;height:30px;background:#005b9a;border-radius:3px 3px 0 0"></div>
<svg style="left:1672px;top:1019px" width="30" height="20" viewBox="0 0 30 20">
<ellipse cx="14.400" cy="9.800" rx="13.400" ry="8.600" fill="#fff"/><path d="M20,15 L28,19 L24,12Z" fill="#fff"/>
<path d="M7.500,6 H15.500 L16.200,4.200 H20.200 L20.800,6 H21.400 V14.400 H7.500Z" fill="#005b9a"/>
<circle cx="14.900" cy="10" r="3.200" fill="#fff"/><circle cx="14.900" cy="10" r="2" fill="#005b9a"/>
</svg>
<div class="t" style="left:1708px;top:1021px;font-size:13px;letter-spacing:0.12px;color:#fff">Report an issue</div>
<svg style="left:1825px;top:1022px" width="17" height="15" viewBox="0 0 17 15"><path d="M0.500,0.500 H16 V10.800 H6 L3,14.300 V10.800 H0.500Z" fill="#fff"/></svg>
<div class="t" style="left:1852px;top:1021px;font-size:13px;letter-spacing:0.3px;color:#fff">Chat</div>

</div>
</body></html>
